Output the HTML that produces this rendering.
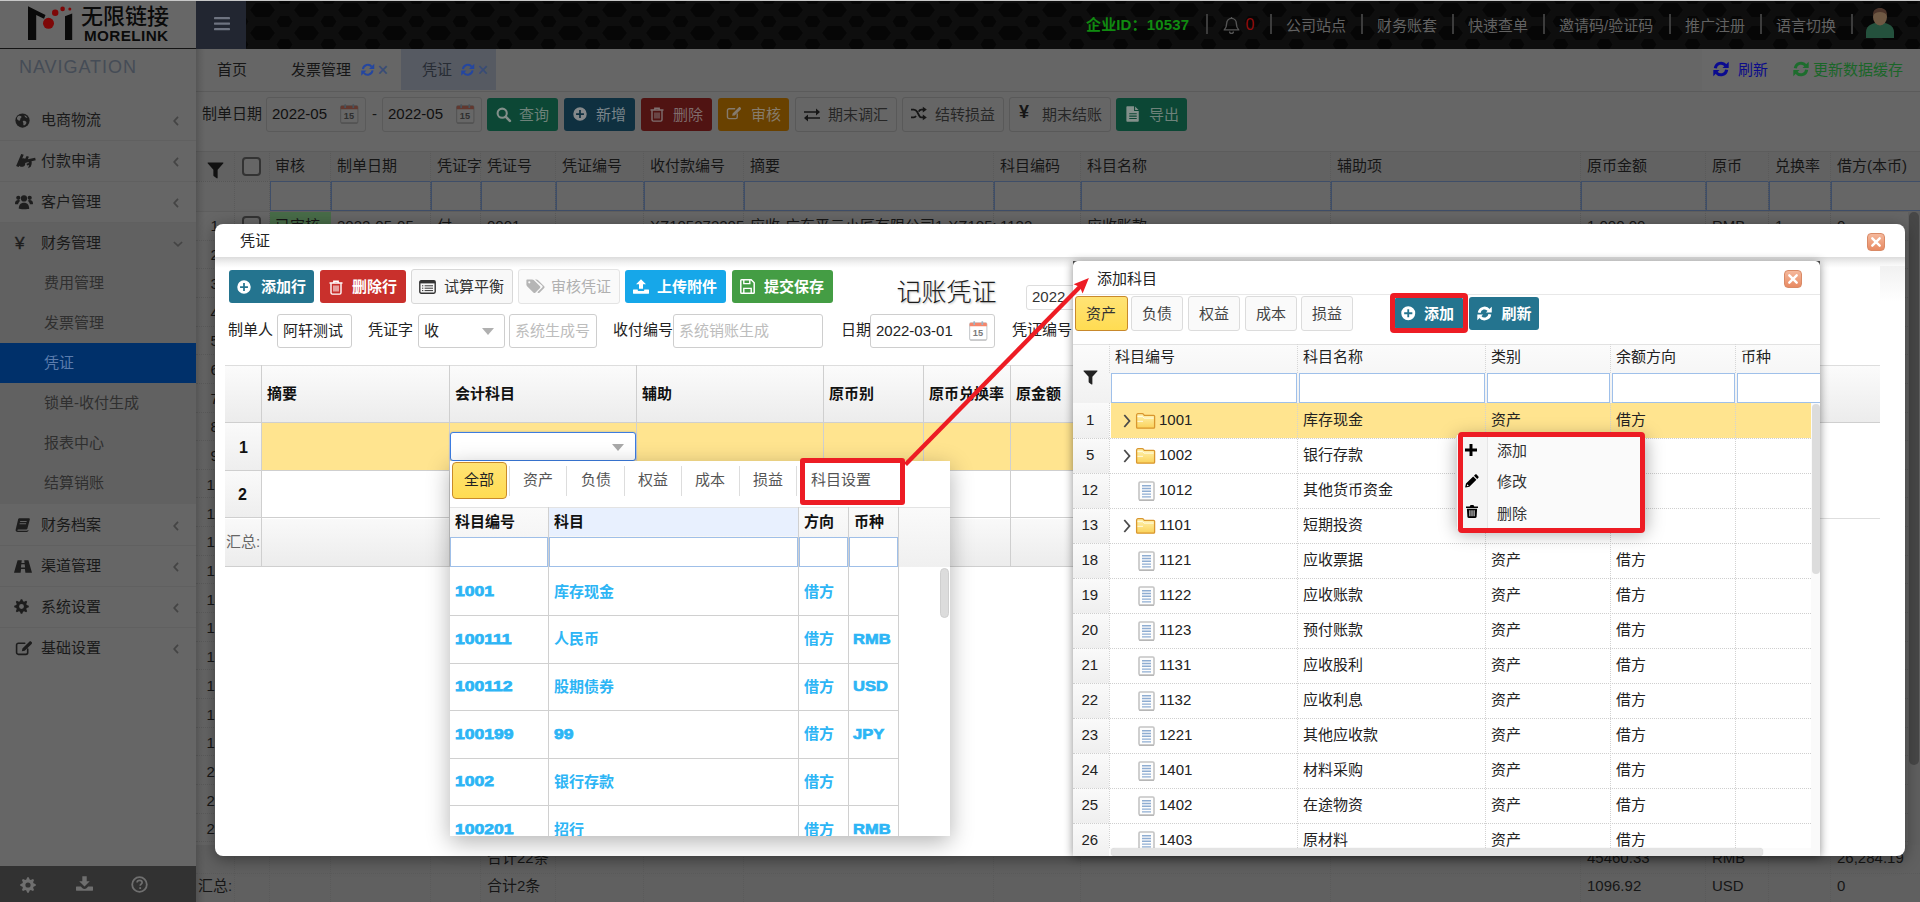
<!DOCTYPE html>
<html lang="zh-CN"><head><meta charset="utf-8"><title>凭证</title><style>
html,body{margin:0;padding:0}
body{width:1920px;height:902px;overflow:hidden;position:relative;background:#666666;
font-family:"Liberation Sans","Noto Sans CJK SC",sans-serif;font-size:15px;color:#222}
div{box-sizing:border-box}
</style></head><body>
<div id="page" style="position:absolute;left:0;top:0;width:1920px;height:902px;overflow:hidden;background:#666666">
<div style="position:absolute;left:0;top:0;width:1920px;height:1px;background:#c8c8c8"></div>
<div style="position:absolute;left:0px;top:1px;width:196px;height:901px;box-sizing:border-box;background:#666666;"></div><div style="position:absolute;left:0px;top:1px;width:196px;height:47px;box-sizing:border-box;background:#676767;"></div><div style="position:absolute;left:0px;top:48px;width:196px;height:1px;box-sizing:border-box;background:#141414;"></div><svg style="position:absolute;left:26px;top:5px" width="48" height="37" viewBox="0 0 48 37"><path d="M2 1.200 L19.500 10 L18 13.800 L10.200 10 L10.200 35 L2 35z" fill="#0a0a0a"/><path d="M39 11.300 L46.200 8.500 L46.200 35 L39 35z" fill="#0a0a0a"/><circle cx="22.500" cy="18.300" r="5.500" fill="#7e0808"/><circle cx="29.200" cy="7.800" r="3.200" fill="#7e0808"/><circle cx="36.600" cy="3.900" r="2.300" fill="#7e0808"/><circle cx="43.800" cy="3.900" r="1.500" fill="#7e0808"/></svg><div style="position:absolute;left:81px;top:4.5px;height:24px;line-height:24px;font-size:22px;color:#0a0a0a;font-weight:500;white-space:nowrap;letter-spacing:0px;">无限链接</div><div style="position:absolute;left:83.5px;top:27.5px;height:16px;line-height:16px;font-size:14px;color:#0a0a0a;font-weight:bold;white-space:nowrap;letter-spacing:0.35px;transform:scaleX(1.09);transform-origin:0 50%;">MORELINK</div><div style="position:absolute;left:19px;top:55.0px;height:24px;line-height:24px;font-size:18px;color:#454c56;font-weight:normal;white-space:nowrap;letter-spacing:0.95px;">NAVIGATION</div><div style="position:absolute;left:0px;top:222px;width:196px;height:282px;box-sizing:border-box;background:#616161;"></div><div style="position:absolute;left:41px;top:108.5px;height:21px;line-height:21px;font-size:15px;color:#1a1a1a;font-weight:normal;white-space:nowrap;">电商物流</div><svg style="position:absolute;left:15px;top:113px;overflow:visible" width="15" height="15" viewBox="0 0 16 16" ><circle cx="8" cy="8" r="7.6" fill="#1d1d1d"/><path d="M3.2 3.4c1.4-.9 2.9-.6 3.6.2.6.8-.4 1.500-1 2.300-.5.7.2 1.500-.6 2.100-.9.5-2.200-.3-2.900-1.300-.5-1.100-.1-2.500.9-3.300z" fill="#666666"/><path d="M8.6 8.600c1-.5 2.600-.2 3.300.7.6.9.1 2.200-.7 3-.7.8-1.700 1.300-2.200.5-.4-.7.2-1.500-.2-2.300-.3-.7-1-1.400-.2-1.900z" fill="#666666"/><path d="M10.200 2.300c1.300.4 2.500 1.400 3.100 2.700-.7.3-1.500.2-2-.4-.5-.6-1.300-1.300-1.100-2.300z" fill="#666666"/></svg><svg style="position:absolute;left:173px;top:115.5px;overflow:visible" width="6" height="10" viewBox="0 0 6 10" ><path d="M5 .9 1.200 5 5 9.100" fill="none" stroke="#444" stroke-width="1.700"/></svg><div style="position:absolute;left:41px;top:149.5px;height:21px;line-height:21px;font-size:15px;color:#1a1a1a;font-weight:normal;white-space:nowrap;">付款申请</div><svg style="position:absolute;left:14.5px;top:152.5px;overflow:visible" width="21.5" height="16" viewBox="0 0 19 14" ><path d="M1 11.500 5.500.8l2.200.6-1.300 3.400c.9-.5 2-.4 2.600.3l1.300-2.600 2 .7-1 2.300 6.500-1.300.5 2.200-3.700.9c.5 1.600 0 3.300-.7 4.800l-2.300 1.200.9-2.700-1.800.4-.6-1.600 2.100-.6-.2-1-3 .9c.3 1.300-.2 2.600-1.500 3.200-1.400.6-2.800.2-3.500-.800l-.9 1.300z" fill="#1d1d1d"/></svg><svg style="position:absolute;left:173px;top:156.5px;overflow:visible" width="6" height="10" viewBox="0 0 6 10" ><path d="M5 .9 1.200 5 5 9.100" fill="none" stroke="#444" stroke-width="1.700"/></svg><div style="position:absolute;left:41px;top:190.5px;height:21px;line-height:21px;font-size:15px;color:#1a1a1a;font-weight:normal;white-space:nowrap;">客户管理</div><svg style="position:absolute;left:14.5px;top:194px;overflow:visible" width="18" height="15.5" viewBox="0 0 18 15" ><circle cx="9" cy="4.2" r="3.100" fill="#1d1d1d"/><path d="M3.800 14.500c0-4 2-6 5.200-6s5.200 2 5.200 6c0 .6-10.400.6-10.400 0z" fill="#1d1d1d"/><circle cx="3.300" cy="3.600" r="2.100" fill="#1d1d1d"/><path d="M0 9.500c0-2.600 1.200-3.800 3.300-3.800.8 0 1.500.3 2 .7-1.300 1-2 2.200-2.200 3.600-1.600 0-3.100.2-3.100-.5z" fill="#1d1d1d"/><circle cx="14.700" cy="3.600" r="2.100" fill="#1d1d1d"/><path d="M18 9.500c0-2.600-1.200-3.800-3.300-3.800-.8 0-1.500.3-2 .7 1.300 1 2 2.200 2.200 3.600 1.600 0 3.100.2 3.100-.5z" fill="#1d1d1d"/></svg><svg style="position:absolute;left:173px;top:197.5px;overflow:visible" width="6" height="10" viewBox="0 0 6 10" ><path d="M5 .9 1.200 5 5 9.100" fill="none" stroke="#444" stroke-width="1.700"/></svg><div style="position:absolute;left:41px;top:231.5px;height:21px;line-height:21px;font-size:15px;color:#1a1a1a;font-weight:normal;white-space:nowrap;">财务管理</div><div style="position:absolute;left:15px;top:232.0px;height:23px;line-height:23px;font-size:17px;color:#1d1d1d;font-weight:normal;white-space:nowrap;-webkit-text-stroke:0.4px #1d1d1d;">¥</div><svg style="position:absolute;left:172.5px;top:241px;overflow:visible" width="10" height="6" viewBox="0 0 10 6" ><path d="M.9 1 5 4.800 9.100 1" fill="none" stroke="#444" stroke-width="1.700"/></svg><div style="position:absolute;left:41px;top:513.5px;height:21px;line-height:21px;font-size:15px;color:#1a1a1a;font-weight:normal;white-space:nowrap;">财务档案</div><svg style="position:absolute;left:15px;top:518px;overflow:visible" width="15" height="14" viewBox="0 0 15 14" ><path d="M4.200.3h9.600c.8 0 1.200.6 1 1.300L12.400 10.500c-.2.700-.9 1.100-1.600 1.100H3.200c-.5 0-.8.3-.8.6 0 .4.300.6.800.6h8.700c.5 0 1-.4 1.100-.8l.5.300c-.2 1-.9 1.600-1.800 1.600H2.800C1.300 13.900.3 12.800.7 11.500L3 2C3.100 1 3.600.3 4.200.3z" fill="#1d1d1d"/><rect x="6" y="3" width="6.500" height="1" fill="#666666" transform="skewX(-14)"/><rect x="6" y="5.200" width="6.500" height="1" fill="#666666" transform="skewX(-14)"/></svg><svg style="position:absolute;left:173px;top:520.5px;overflow:visible" width="6" height="10" viewBox="0 0 6 10" ><path d="M5 .9 1.200 5 5 9.100" fill="none" stroke="#444" stroke-width="1.700"/></svg><div style="position:absolute;left:41px;top:554.5px;height:21px;line-height:21px;font-size:15px;color:#1a1a1a;font-weight:normal;white-space:nowrap;">渠道管理</div><svg style="position:absolute;left:14px;top:560px;overflow:visible" width="18" height="13" viewBox="0 0 18 13" ><path d="M3.600.3h4.200L7.400 3H10.600L10.200.3h4.200L18 12.700h-6.600L10.900 9H7.100l-.5 3.700H0z M7.300 4.200 6.900 7.500h4.200l-.4-3.300z" fill="#1d1d1d" fill-rule="evenodd"/></svg><svg style="position:absolute;left:173px;top:561.5px;overflow:visible" width="6" height="10" viewBox="0 0 6 10" ><path d="M5 .9 1.200 5 5 9.100" fill="none" stroke="#444" stroke-width="1.700"/></svg><div style="position:absolute;left:41px;top:595.5px;height:21px;line-height:21px;font-size:15px;color:#1a1a1a;font-weight:normal;white-space:nowrap;">系统设置</div><svg style="position:absolute;left:14px;top:599px;overflow:visible" width="15" height="15" viewBox="0 0 16 16" ><path d="M15.76 7.24 L15.76 8.76 L13.55 9.68 L13.12 10.73 L14.03 12.95 L12.95 14.03 L10.73 13.12 L9.68 13.55 L8.76 15.76 L7.24 15.76 L6.32 13.55 L5.27 13.12 L3.05 14.03 L1.97 12.95 L2.88 10.73 L2.45 9.68 L0.24 8.76 L0.24 7.24 L2.45 6.32 L2.88 5.27 L1.97 3.05 L3.05 1.97 L5.27 2.88 L6.32 2.45 L7.24 0.24 L8.76 0.24 L9.68 2.45 L10.73 2.88 L12.95 1.97 L14.03 3.05 L13.12 5.27 L13.55 6.32Z M8 5.400a2.600 2.600 0 1 0 0 5.200 2.600 2.600 0 1 0 0-5.200z" fill="#1d1d1d" fill-rule="evenodd"/></svg><svg style="position:absolute;left:173px;top:602.5px;overflow:visible" width="6" height="10" viewBox="0 0 6 10" ><path d="M5 .9 1.200 5 5 9.100" fill="none" stroke="#444" stroke-width="1.700"/></svg><div style="position:absolute;left:41px;top:636.5px;height:21px;line-height:21px;font-size:15px;color:#1a1a1a;font-weight:normal;white-space:nowrap;">基础设置</div><svg style="position:absolute;left:15px;top:640px;overflow:visible" width="18" height="16" viewBox="0 0 17 15" ><path d="M12 8.500v3.300c0 1-.8 1.700-1.700 1.700H3.200c-1 0-1.700-.8-1.700-1.700V4.700c0-1 .8-1.700 1.700-1.700h6" fill="none" stroke="#1d1d1d" stroke-width="1.500" stroke-linecap="round"/><path d="M6.500 10.500 7 8 13.500 1.500c.5-.5 1.300-.5 1.800 0l.4.400c.5.5.5 1.300 0 1.800L9.200 10.200z" fill="#1d1d1d"/></svg><svg style="position:absolute;left:173px;top:643.5px;overflow:visible" width="6" height="10" viewBox="0 0 6 10" ><path d="M5 .9 1.200 5 5 9.100" fill="none" stroke="#444" stroke-width="1.700"/></svg><div style="position:absolute;left:0px;top:140px;width:196px;height:1px;box-sizing:border-box;background:#606060;"></div><div style="position:absolute;left:0px;top:181px;width:196px;height:1px;box-sizing:border-box;background:#606060;"></div><div style="position:absolute;left:0px;top:222px;width:196px;height:1px;box-sizing:border-box;background:#606060;"></div><div style="position:absolute;left:0px;top:545px;width:196px;height:1px;box-sizing:border-box;background:#606060;"></div><div style="position:absolute;left:0px;top:586px;width:196px;height:1px;box-sizing:border-box;background:#606060;"></div><div style="position:absolute;left:0px;top:627px;width:196px;height:1px;box-sizing:border-box;background:#606060;"></div><div style="position:absolute;left:0px;top:343px;width:196px;height:40px;box-sizing:border-box;background:#00306a;"></div><div style="position:absolute;left:44px;top:271.5px;height:21px;line-height:21px;font-size:15px;color:#2f2f2f;font-weight:normal;white-space:nowrap;">费用管理</div><div style="position:absolute;left:44px;top:311.5px;height:21px;line-height:21px;font-size:15px;color:#2f2f2f;font-weight:normal;white-space:nowrap;">发票管理</div><div style="position:absolute;left:44px;top:351.5px;height:21px;line-height:21px;font-size:15px;color:#5b7cad;font-weight:normal;white-space:nowrap;">凭证</div><div style="position:absolute;left:44px;top:391.5px;height:21px;line-height:21px;font-size:15px;color:#2f2f2f;font-weight:normal;white-space:nowrap;">锁单-收付生成</div><div style="position:absolute;left:44px;top:431.5px;height:21px;line-height:21px;font-size:15px;color:#2f2f2f;font-weight:normal;white-space:nowrap;">报表中心</div><div style="position:absolute;left:44px;top:471.5px;height:21px;line-height:21px;font-size:15px;color:#2f2f2f;font-weight:normal;white-space:nowrap;">结算销账</div><div style="position:absolute;left:0px;top:866px;width:196px;height:36px;box-sizing:border-box;background:#323232;"></div><svg style="position:absolute;left:20px;top:877px;overflow:visible" width="16" height="16" viewBox="0 0 16 16" ><path d="M15.76 7.24 L15.76 8.76 L13.55 9.68 L13.12 10.73 L14.03 12.95 L12.95 14.03 L10.73 13.12 L9.68 13.55 L8.76 15.76 L7.24 15.76 L6.32 13.55 L5.27 13.12 L3.05 14.03 L1.97 12.95 L2.88 10.73 L2.45 9.68 L0.24 8.76 L0.24 7.24 L2.45 6.32 L2.88 5.27 L1.97 3.05 L3.05 1.97 L5.27 2.88 L6.32 2.45 L7.24 0.24 L8.76 0.24 L9.68 2.45 L10.73 2.88 L12.95 1.97 L14.03 3.05 L13.12 5.27 L13.55 6.32Z M8 5.400a2.600 2.600 0 1 0 0 5.200 2.600 2.600 0 1 0 0-5.200z" fill="#6f6f6f" fill-rule="evenodd"/></svg><svg style="position:absolute;left:76px;top:876px;overflow:visible" width="17" height="15" viewBox="0 0 17 15" ><path d="M6.300.2h4.400v5h3.100L8.500 10.500 3.200 5.200h3.100z" fill="#6f6f6f"/><path d="M.5 10.500h4.300l1.700 1.700c1.100 1.100 2.900 1.100 4 0l1.700-1.700h4.300c.3 0 .5.200.5.500v3.300c0 .3-.2.500-.5.500H.5c-.3 0-.5-.2-.5-.5V11c0-.3.200-.5.500-.5z" fill="#6f6f6f"/></svg><svg style="position:absolute;left:131px;top:876px;overflow:visible" width="17" height="17" viewBox="0 0 17 17" ><circle cx="8.500" cy="8.500" r="7.300" fill="none" stroke="#6f6f6f" stroke-width="1.800"/><path d="M6.100 6.600c0-1.400 1.100-2.300 2.500-2.300s2.500.9 2.500 2.200c0 1.600-1.900 1.700-1.900 3.300" fill="none" stroke="#6f6f6f" stroke-width="1.700"/><rect x="8.300" y="11.200" width="1.800" height="1.800" fill="#6f6f6f"/></svg>
<svg style="position:absolute;left:196px;top:1px" width="1724" height="48"><defs><pattern id="hx" width="44" height="23" patternUnits="userSpaceOnUse"><path d="M10.0 9L15.5 2L29.5 2L35.0 9L29.5 16L15.5 16z" fill="#060606"/><path d="M-7.5 20.5L-4.0 15.0L5.0 15.0L8.5 20.5L5.0 26.0L-4.0 26.0z" fill="#060606"/><path d="M-7.5 -2.5L-4.0 -8.0L5.0 -8.0L8.5 -2.5L5.0 3.0L-4.0 3.0z" fill="#060606"/><path d="M36.5 20.5L40.0 15.0L49.0 15.0L52.5 20.5L49.0 26.0L40.0 26.0z" fill="#060606"/><path d="M36.5 -2.5L40.0 -8.0L49.0 -8.0L52.5 -2.5L49.0 3.0L40.0 3.0z" fill="#060606"/></pattern></defs><rect width="1724" height="48" fill="#0e0e0e"/><rect width="1724" height="48" fill="url(#hx)"/></svg><div style="position:absolute;left:196px;top:1px;width:50px;height:48px;box-sizing:border-box;background:#222631;"></div><svg style="position:absolute;left:214px;top:17px;overflow:visible" width="16" height="14" viewBox="0 0 16 14" ><rect x="0" y="0" width="16" height="2.2" rx=".4" fill="#6e7380"/><rect x="0" y="5.5" width="16" height="2.2" rx=".4" fill="#6e7380"/><rect x="0" y="11" width="16" height="2.2" rx=".4" fill="#6e7380"/></svg><div style="position:absolute;left:1086px;top:14.0px;height:21px;line-height:21px;font-size:15px;color:#108a10;font-weight:bold;white-space:nowrap;letter-spacing:0.15px;">企业ID：10537</div><div style="position:absolute;left:1206px;top:14px;width:1.5px;height:20px;box-sizing:border-box;background:#3c3c3c;"></div><div style="position:absolute;left:1270px;top:14px;width:1.5px;height:20px;box-sizing:border-box;background:#3c3c3c;"></div><div style="position:absolute;left:1361px;top:14px;width:1.5px;height:20px;box-sizing:border-box;background:#3c3c3c;"></div><div style="position:absolute;left:1452px;top:14px;width:1.5px;height:20px;box-sizing:border-box;background:#3c3c3c;"></div><div style="position:absolute;left:1543px;top:14px;width:1.5px;height:20px;box-sizing:border-box;background:#3c3c3c;"></div><div style="position:absolute;left:1669px;top:14px;width:1.5px;height:20px;box-sizing:border-box;background:#3c3c3c;"></div><div style="position:absolute;left:1760px;top:14px;width:1.5px;height:20px;box-sizing:border-box;background:#3c3c3c;"></div><div style="position:absolute;left:1851px;top:14px;width:1.5px;height:20px;box-sizing:border-box;background:#3c3c3c;"></div><svg style="position:absolute;left:1223px;top:16.5px;overflow:visible" width="17" height="18" viewBox="0 0 15 16" ><path d="M7.500 1.200c2.600 0 4.300 2 4.300 4.600 0 3.400 1 4.600 2.200 5.700H1c1.200-1.100 2.200-2.300 2.200-5.700 0-2.600 1.700-4.600 4.300-4.600z" fill="none" stroke="#555" stroke-width="1.200" stroke-linejoin="round"/><path d="M5.800 12.800c0 1 .7 1.800 1.700 1.800s1.700-.8 1.700-1.800" fill="none" stroke="#555" stroke-width="1.200"/><rect x="6.900" y="0" width="1.200" height="1.500" fill="#555"/></svg><div style="position:absolute;left:1245.5px;top:14.0px;height:22px;line-height:22px;font-size:16px;color:#930c0c;font-weight:normal;white-space:nowrap;">0</div><div style="position:absolute;left:1286px;top:14.5px;height:21px;line-height:21px;font-size:15px;color:#626262;font-weight:normal;white-space:nowrap;">公司站点</div><div style="position:absolute;left:1377px;top:14.5px;height:21px;line-height:21px;font-size:15px;color:#626262;font-weight:normal;white-space:nowrap;">财务账套</div><div style="position:absolute;left:1468px;top:14.5px;height:21px;line-height:21px;font-size:15px;color:#626262;font-weight:normal;white-space:nowrap;">快速查单</div><div style="position:absolute;left:1559px;top:14.5px;height:21px;line-height:21px;font-size:15px;color:#626262;font-weight:normal;white-space:nowrap;">邀请码/验证码</div><div style="position:absolute;left:1685px;top:14.5px;height:21px;line-height:21px;font-size:15px;color:#626262;font-weight:normal;white-space:nowrap;">推广注册</div><div style="position:absolute;left:1776px;top:14.5px;height:21px;line-height:21px;font-size:15px;color:#626262;font-weight:normal;white-space:nowrap;">语言切换</div><svg style="position:absolute;left:1866px;top:8px" width="28" height="30" viewBox="0 0 28 30"><path d="M0 30v-6c0-5 4-8 9-9h10c5 1 9 4 9 9v6z" fill="#24513d"/><ellipse cx="14" cy="9" rx="7" ry="8.500" fill="#6e5843"/><path d="M7 7c0-5 3-7 7-7s7 2 7 7c-2-2-4-3-7-3s-5 1-7 3z" fill="#4b342a"/></svg>
<div style="position:absolute;left:196px;top:49px;width:1724px;height:42px;box-sizing:border-box;background:#666666;"></div><div style="position:absolute;left:196px;top:91px;width:1724px;height:1px;box-sizing:border-box;background:#5b5b5b;"></div><div style="position:absolute;left:401px;top:49px;width:95px;height:41px;box-sizing:border-box;background:#565a62;"></div><div style="position:absolute;left:217px;top:58.5px;height:21px;line-height:21px;font-size:15px;color:#161616;font-weight:normal;white-space:nowrap;">首页</div><div style="position:absolute;left:291px;top:58.5px;height:21px;line-height:21px;font-size:15px;color:#161616;font-weight:normal;white-space:nowrap;">发票管理</div><svg style="position:absolute;left:361px;top:63px;overflow:visible" width="13.5" height="13.5" viewBox="0 0 16 16" ><path d="M2.300 7.200A5.800 5.800 0 0 1 12.600 4.400" fill="none" stroke="#2446a0" stroke-width="2.3"/><path d="M15.700.800V7H9.500z" fill="#2446a0"/><path d="M13.700 8.800A5.800 5.800 0 0 1 3.400 11.600" fill="none" stroke="#2446a0" stroke-width="2.3"/><path d="M.300 15.200V9H6.500z" fill="#2446a0"/></svg><div style="position:absolute;left:377.5px;top:58.0px;height:24px;line-height:24px;font-size:18px;color:#384c78;font-weight:normal;white-space:nowrap;font-family:Liberation Sans,sans-serif;-webkit-text-stroke:0.35px #384c78;">×</div><div style="position:absolute;left:422px;top:58.5px;height:21px;line-height:21px;font-size:15px;color:#272c34;font-weight:normal;white-space:nowrap;">凭证</div><svg style="position:absolute;left:461px;top:63px;overflow:visible" width="13.5" height="13.5" viewBox="0 0 16 16" ><path d="M2.300 7.200A5.800 5.800 0 0 1 12.600 4.400" fill="none" stroke="#2446a0" stroke-width="2.3"/><path d="M15.700.800V7H9.500z" fill="#2446a0"/><path d="M13.700 8.800A5.800 5.800 0 0 1 3.400 11.600" fill="none" stroke="#2446a0" stroke-width="2.3"/><path d="M.300 15.200V9H6.500z" fill="#2446a0"/></svg><div style="position:absolute;left:477.5px;top:58.0px;height:24px;line-height:24px;font-size:18px;color:#384c78;font-weight:normal;white-space:nowrap;font-family:Liberation Sans,sans-serif;-webkit-text-stroke:0.35px #384c78;">×</div><div style="position:absolute;left:1702px;top:49px;width:218px;height:42px;box-sizing:border-box;background:#686868;"></div><svg style="position:absolute;left:1713px;top:60.5px;overflow:visible" width="16" height="16" viewBox="0 0 16 16" ><path d="M2.300 7.200A5.800 5.800 0 0 1 12.600 4.400" fill="none" stroke="#0a0a90" stroke-width="3"/><path d="M15.700.800V7H9.500z" fill="#0a0a90"/><path d="M13.700 8.800A5.800 5.800 0 0 1 3.400 11.600" fill="none" stroke="#0a0a90" stroke-width="3"/><path d="M.300 15.200V9H6.500z" fill="#0a0a90"/></svg><div style="position:absolute;left:1738px;top:58.5px;height:21px;line-height:21px;font-size:15px;color:#0c0c8a;font-weight:normal;white-space:nowrap;">刷新</div><svg style="position:absolute;left:1793px;top:60.5px;overflow:visible" width="16" height="16" viewBox="0 0 16 16" ><path d="M2.300 7.200A5.800 5.800 0 0 1 12.600 4.400" fill="none" stroke="#1d6d2d" stroke-width="3"/><path d="M15.700.800V7H9.500z" fill="#1d6d2d"/><path d="M13.700 8.800A5.800 5.800 0 0 1 3.400 11.600" fill="none" stroke="#1d6d2d" stroke-width="3"/><path d="M.300 15.200V9H6.500z" fill="#1d6d2d"/></svg><div style="position:absolute;left:1813px;top:58.5px;height:21px;line-height:21px;font-size:15px;color:#1a6628;font-weight:normal;white-space:nowrap;">更新数据缓存</div>
<div style="position:absolute;left:202px;top:103.0px;height:21px;line-height:21px;font-size:15px;color:#161616;font-weight:normal;white-space:nowrap;">制单日期</div><div style="position:absolute;left:266px;top:97px;width:100px;height:35px;box-sizing:border-box;border:1px solid #5a5a5a;border-radius:3px;background:#666666;"></div><div style="position:absolute;left:272px;top:103.0px;height:21px;line-height:21px;font-size:15px;color:#101010;font-weight:normal;white-space:nowrap;">2022-05</div><svg style="position:absolute;left:340px;top:104px;overflow:visible" width="18.5" height="20.041666666666668" viewBox="0 0 18 19.500" ><rect x=".6" y="1.800" width="16.800" height="16.600" rx="1.300" fill="#676767" stroke="#555555" stroke-width="1.100"/><path d="M1.200 18.700h15.600" stroke="#525252" stroke-width="1.100"/><path d="M.6 5.200V3.100c0-.700.600-1.300 1.300-1.300h14.200c.700 0 1.300.600 1.300 1.300v2.100z" fill="#62382f"/><rect x="4.200" y=".2" width="1.700" height="3.600" rx=".5" fill="#49525a"/><rect x="12.100" y=".2" width="1.700" height="3.600" rx=".5" fill="#49525a"/><text x="8.700" y="14.300" font-family="Liberation Sans, sans-serif" font-size="9" font-weight="bold" text-anchor="middle" fill="#2f2f2f">15</text></svg><div style="position:absolute;left:382px;top:97px;width:100px;height:35px;box-sizing:border-box;border:1px solid #5a5a5a;border-radius:3px;background:#666666;"></div><div style="position:absolute;left:388px;top:103.0px;height:21px;line-height:21px;font-size:15px;color:#101010;font-weight:normal;white-space:nowrap;">2022-05</div><svg style="position:absolute;left:456px;top:104px;overflow:visible" width="18.5" height="20.041666666666668" viewBox="0 0 18 19.500" ><rect x=".6" y="1.800" width="16.800" height="16.600" rx="1.300" fill="#676767" stroke="#555555" stroke-width="1.100"/><path d="M1.200 18.700h15.600" stroke="#525252" stroke-width="1.100"/><path d="M.6 5.200V3.100c0-.700.600-1.300 1.300-1.300h14.200c.700 0 1.300.600 1.300 1.300v2.100z" fill="#62382f"/><rect x="4.200" y=".2" width="1.700" height="3.600" rx=".5" fill="#49525a"/><rect x="12.100" y=".2" width="1.700" height="3.600" rx=".5" fill="#49525a"/><text x="8.700" y="14.300" font-family="Liberation Sans, sans-serif" font-size="9" font-weight="bold" text-anchor="middle" fill="#2f2f2f">15</text></svg><div style="position:absolute;left:372px;top:102.5px;height:21px;line-height:21px;font-size:15px;color:#161616;font-weight:normal;white-space:nowrap;">-</div><div style="position:absolute;left:487px;top:98px;width:71px;height:33px;box-sizing:border-box;background:#0c4735;border-radius:3px;"></div><svg style="position:absolute;left:496px;top:107px;overflow:visible" width="15" height="15" viewBox="0 0 16 16" ><circle cx="6.600" cy="6.600" r="4.900" fill="none" stroke="#83908b" stroke-width="2.200"/><path d="M10.300 10.300 14.800 14.800" stroke="#83908b" stroke-width="2.800" stroke-linecap="round"/></svg><div style="position:absolute;left:519px;top:103.5px;height:21px;line-height:21px;font-size:15px;color:#6e827a;font-weight:normal;white-space:nowrap;">查询</div><div style="position:absolute;left:564px;top:98px;width:71px;height:33px;box-sizing:border-box;background:#0f3040;border-radius:3px;"></div><svg style="position:absolute;left:573px;top:107px;overflow:visible" width="14" height="14" viewBox="0 0 16 16" ><path d="M8 .3a7.700 7.700 0 1 0 0 15.400A7.700 7.700 0 1 0 8 .3z M7 3.500h2v3.500h3.500v2H9v3.500H7V9H3.500V7H7z" fill="#85898b" fill-rule="evenodd"/></svg><div style="position:absolute;left:596px;top:103.5px;height:21px;line-height:21px;font-size:15px;color:#7a858b;font-weight:normal;white-space:nowrap;">新增</div><div style="position:absolute;left:641px;top:98px;width:71px;height:33px;box-sizing:border-box;background:#501312;border-radius:3px;"></div><svg style="position:absolute;left:650px;top:106.5px;overflow:visible" width="14" height="15" viewBox="0 0 14 15" ><path d="M.5 3h13M4.800 3V1.300h4.400V3" fill="none" stroke="#7f7070" stroke-width="1.400"/><path d="M2 3.200v9.500c0 .8.600 1.400 1.400 1.400h7.200c.8 0 1.400-.6 1.400-1.400V3.200" fill="none" stroke="#7f7070" stroke-width="1.400"/><path d="M5 5.500v6M7 5.500v6M9 5.500v6" stroke="#7f7070" stroke-width="1.100"/></svg><div style="position:absolute;left:673px;top:103.5px;height:21px;line-height:21px;font-size:15px;color:#7f6c6c;font-weight:normal;white-space:nowrap;">删除</div><div style="position:absolute;left:718px;top:98px;width:71px;height:33px;box-sizing:border-box;background:#694100;border-radius:3px;"></div><svg style="position:absolute;left:726px;top:106px;overflow:visible" width="16" height="14" viewBox="0 0 17 15" ><path d="M12 8.500v3.300c0 1-.8 1.700-1.700 1.700H3.200c-1 0-1.700-.8-1.700-1.700V4.700c0-1 .8-1.700 1.700-1.700h6" fill="none" stroke="#857b6e" stroke-width="1.500" stroke-linecap="round"/><path d="M6.500 10.500 7 8 13.500 1.500c.5-.5 1.300-.5 1.800 0l.4.400c.5.5.5 1.300 0 1.800L9.200 10.200z" fill="#857b6e"/></svg><div style="position:absolute;left:751px;top:103.5px;height:21px;line-height:21px;font-size:15px;color:#877c6c;font-weight:normal;white-space:nowrap;">审核</div><div style="position:absolute;left:795px;top:97px;width:102px;height:35px;box-sizing:border-box;background:#666666;border-radius:3px;border:1px solid #595959;"></div><svg style="position:absolute;left:804px;top:108px;overflow:visible" width="16" height="14" viewBox="0 0 16 14" ><path d="M0 3.200h12V.6L16 4l-4 3.400V4.800H0z" fill="#161616"/><path d="M16 9.200H4V6.600L0 10l4 3.400v-2.600h12z" fill="#161616"/></svg><div style="position:absolute;left:828px;top:103.5px;height:21px;line-height:21px;font-size:15px;color:#262626;font-weight:normal;white-space:nowrap;">期末调汇</div><div style="position:absolute;left:902px;top:97px;width:102px;height:35px;box-sizing:border-box;background:#666666;border-radius:3px;border:1px solid #595959;"></div><svg style="position:absolute;left:911px;top:107px;overflow:visible" width="16" height="14" viewBox="0 0 16 14" ><path d="M0 2.600h2.800c1.600 0 2.500.8 3.300 2.200L8.400 9c.5.900 1 1.400 2 1.400H12" fill="none" stroke="#161616" stroke-width="1.800"/><path d="M0 10.400h2.800c1.100 0 1.700-.5 2.200-1.300M7.700 4.600C8.300 3.400 9 2.600 10.400 2.600H12" fill="none" stroke="#161616" stroke-width="1.800"/><path d="M11.800-.2 15.800 2.600 11.800 5.400zM11.800 7.600 15.800 10.400 11.800 13.200z" fill="#161616"/></svg><div style="position:absolute;left:935px;top:103.5px;height:21px;line-height:21px;font-size:15px;color:#262626;font-weight:normal;white-space:nowrap;">结转损益</div><div style="position:absolute;left:1009px;top:97px;width:102px;height:35px;box-sizing:border-box;background:#666666;border-radius:3px;border:1px solid #595959;"></div><div style="position:absolute;left:1019px;top:100.0px;height:24px;line-height:24px;font-size:18px;color:#161616;font-weight:bold;white-space:nowrap;">¥</div><div style="position:absolute;left:1042px;top:103.5px;height:21px;line-height:21px;font-size:15px;color:#262626;font-weight:normal;white-space:nowrap;">期末结账</div><div style="position:absolute;left:1116px;top:98px;width:71px;height:33px;box-sizing:border-box;background:#0c4735;border-radius:3px;"></div><svg style="position:absolute;left:1126px;top:106px;overflow:visible" width="14" height="16" viewBox="0 0 13 15" ><path d="M1.200.3h6.300v4.400h4.400v9.100c0 .5-.4.900-.9.900H1.200c-.5 0-.9-.4-.9-.9V1.200c0-.5.400-.9.900-.9z" fill="#83908b"/><path d="M8.500.5 11.700 3.700H8.500z" fill="#83908b"/><path d="M3 7.300h7M3 9.500h7M3 11.700h7" stroke="#0c4735" stroke-width="1"/></svg><div style="position:absolute;left:1149px;top:103.5px;height:21px;line-height:21px;font-size:15px;color:#6e827a;font-weight:normal;white-space:nowrap;">导出</div>
<div style="position:absolute;left:196px;top:151px;width:1724px;height:30px;box-sizing:border-box;background:#626262;border-top:1px solid #5c5c5c;"></div><div style="position:absolute;left:196px;top:181px;width:1724px;height:30px;box-sizing:border-box;background:#646464;"></div><div style="position:absolute;left:196px;top:181px;width:1724px;height:1px;box-sizing:border-box;border-top:1px dotted #575757;"></div><div style="position:absolute;left:196px;top:211px;width:1724px;height:1px;box-sizing:border-box;background:#5e5e5e;"></div><svg style="position:absolute;left:207px;top:162px;overflow:visible" width="17" height="17" viewBox="0 0 16 16" ><path d="M.6 1.200C.4.800.7.400 1.100.400h13.800c.4 0 .7.400.5.800L10 7.300v7.600c0 .500-.5.800-.900.500L6.500 13.500c-.300-.2-.500-.5-.500-.9V7.300z" fill="#111"/></svg><div style="position:absolute;left:242px;top:157px;width:19px;height:19px;box-sizing:border-box;border:2px solid #333;border-radius:4px;background:#666666;"></div><div style="position:absolute;left:234px;top:151px;width:1px;height:751px;box-sizing:border-box;border-left:1px dotted #5a5a5a;"></div><div style="position:absolute;left:269px;top:151px;width:1px;height:751px;box-sizing:border-box;border-left:1px dotted #5a5a5a;"></div><div style="position:absolute;left:275px;top:154.5px;height:21px;line-height:21px;font-size:15px;color:#161616;font-weight:normal;white-space:nowrap;">审核</div><div style="position:absolute;left:270px;top:181px;width:61px;height:30px;box-sizing:border-box;border:1px solid #3f4e68;background:#666666;"></div><div style="position:absolute;left:330px;top:151px;width:1px;height:751px;box-sizing:border-box;border-left:1px dotted #5a5a5a;"></div><div style="position:absolute;left:337px;top:154.5px;height:21px;line-height:21px;font-size:15px;color:#161616;font-weight:normal;white-space:nowrap;">制单日期</div><div style="position:absolute;left:331px;top:181px;width:100px;height:30px;box-sizing:border-box;border:1px solid #3f4e68;background:#666666;"></div><div style="position:absolute;left:430px;top:151px;width:1px;height:751px;box-sizing:border-box;border-left:1px dotted #5a5a5a;"></div><div style="position:absolute;left:437px;top:154.5px;height:21px;line-height:21px;font-size:15px;color:#161616;font-weight:normal;white-space:nowrap;">凭证字</div><div style="position:absolute;left:431px;top:181px;width:50px;height:30px;box-sizing:border-box;border:1px solid #3f4e68;background:#666666;"></div><div style="position:absolute;left:480px;top:151px;width:1px;height:751px;box-sizing:border-box;border-left:1px dotted #5a5a5a;"></div><div style="position:absolute;left:487px;top:154.5px;height:21px;line-height:21px;font-size:15px;color:#161616;font-weight:normal;white-space:nowrap;">凭证号</div><div style="position:absolute;left:481px;top:181px;width:75px;height:30px;box-sizing:border-box;border:1px solid #3f4e68;background:#666666;"></div><div style="position:absolute;left:555px;top:151px;width:1px;height:751px;box-sizing:border-box;border-left:1px dotted #5a5a5a;"></div><div style="position:absolute;left:562px;top:154.5px;height:21px;line-height:21px;font-size:15px;color:#161616;font-weight:normal;white-space:nowrap;">凭证编号</div><div style="position:absolute;left:556px;top:181px;width:88px;height:30px;box-sizing:border-box;border:1px solid #3f4e68;background:#666666;"></div><div style="position:absolute;left:643px;top:151px;width:1px;height:751px;box-sizing:border-box;border-left:1px dotted #5a5a5a;"></div><div style="position:absolute;left:650px;top:154.5px;height:21px;line-height:21px;font-size:15px;color:#161616;font-weight:normal;white-space:nowrap;">收付款编号</div><div style="position:absolute;left:644px;top:181px;width:100px;height:30px;box-sizing:border-box;border:1px solid #3f4e68;background:#666666;"></div><div style="position:absolute;left:743px;top:151px;width:1px;height:751px;box-sizing:border-box;border-left:1px dotted #5a5a5a;"></div><div style="position:absolute;left:750px;top:154.5px;height:21px;line-height:21px;font-size:15px;color:#161616;font-weight:normal;white-space:nowrap;">摘要</div><div style="position:absolute;left:744px;top:181px;width:250px;height:30px;box-sizing:border-box;border:1px solid #3f4e68;background:#666666;"></div><div style="position:absolute;left:993px;top:151px;width:1px;height:751px;box-sizing:border-box;border-left:1px dotted #5a5a5a;"></div><div style="position:absolute;left:1000px;top:154.5px;height:21px;line-height:21px;font-size:15px;color:#161616;font-weight:normal;white-space:nowrap;">科目编码</div><div style="position:absolute;left:994px;top:181px;width:87px;height:30px;box-sizing:border-box;border:1px solid #3f4e68;background:#666666;"></div><div style="position:absolute;left:1080px;top:151px;width:1px;height:751px;box-sizing:border-box;border-left:1px dotted #5a5a5a;"></div><div style="position:absolute;left:1087px;top:154.5px;height:21px;line-height:21px;font-size:15px;color:#161616;font-weight:normal;white-space:nowrap;">科目名称</div><div style="position:absolute;left:1081px;top:181px;width:250px;height:30px;box-sizing:border-box;border:1px solid #3f4e68;background:#666666;"></div><div style="position:absolute;left:1330px;top:151px;width:1px;height:751px;box-sizing:border-box;border-left:1px dotted #5a5a5a;"></div><div style="position:absolute;left:1337px;top:154.5px;height:21px;line-height:21px;font-size:15px;color:#161616;font-weight:normal;white-space:nowrap;">辅助项</div><div style="position:absolute;left:1331px;top:181px;width:250px;height:30px;box-sizing:border-box;border:1px solid #3f4e68;background:#666666;"></div><div style="position:absolute;left:1580px;top:151px;width:1px;height:751px;box-sizing:border-box;border-left:1px dotted #5a5a5a;"></div><div style="position:absolute;left:1587px;top:154.5px;height:21px;line-height:21px;font-size:15px;color:#161616;font-weight:normal;white-space:nowrap;">原币金额</div><div style="position:absolute;left:1581px;top:181px;width:125px;height:30px;box-sizing:border-box;border:1px solid #3f4e68;background:#666666;"></div><div style="position:absolute;left:1705px;top:151px;width:1px;height:751px;box-sizing:border-box;border-left:1px dotted #5a5a5a;"></div><div style="position:absolute;left:1712px;top:154.5px;height:21px;line-height:21px;font-size:15px;color:#161616;font-weight:normal;white-space:nowrap;">原币</div><div style="position:absolute;left:1706px;top:181px;width:63px;height:30px;box-sizing:border-box;border:1px solid #3f4e68;background:#666666;"></div><div style="position:absolute;left:1768px;top:151px;width:1px;height:751px;box-sizing:border-box;border-left:1px dotted #5a5a5a;"></div><div style="position:absolute;left:1775px;top:154.5px;height:21px;line-height:21px;font-size:15px;color:#161616;font-weight:normal;white-space:nowrap;">兑换率</div><div style="position:absolute;left:1769px;top:181px;width:62px;height:30px;box-sizing:border-box;border:1px solid #3f4e68;background:#666666;"></div><div style="position:absolute;left:1830px;top:151px;width:1px;height:751px;box-sizing:border-box;border-left:1px dotted #5a5a5a;"></div><div style="position:absolute;left:1837px;top:154.5px;height:21px;line-height:21px;font-size:15px;color:#161616;font-weight:normal;white-space:nowrap;">借方(本币)</div><div style="position:absolute;left:1831px;top:181px;width:94px;height:30px;box-sizing:border-box;border:1px solid #3f4e68;background:#666666;"></div><div style="position:absolute;left:196px;top:240px;width:1712px;height:1px;box-sizing:border-box;border-top:1px dotted #5c5c5c;"></div><div style="position:absolute;left:196px;top:268px;width:1712px;height:1px;box-sizing:border-box;border-top:1px dotted #5c5c5c;"></div><div style="position:absolute;left:196px;top:297px;width:1712px;height:1px;box-sizing:border-box;border-top:1px dotted #5c5c5c;"></div><div style="position:absolute;left:196px;top:326px;width:1712px;height:1px;box-sizing:border-box;border-top:1px dotted #5c5c5c;"></div><div style="position:absolute;left:196px;top:354px;width:1712px;height:1px;box-sizing:border-box;border-top:1px dotted #5c5c5c;"></div><div style="position:absolute;left:196px;top:383px;width:1712px;height:1px;box-sizing:border-box;border-top:1px dotted #5c5c5c;"></div><div style="position:absolute;left:196px;top:412px;width:1712px;height:1px;box-sizing:border-box;border-top:1px dotted #5c5c5c;"></div><div style="position:absolute;left:196px;top:440px;width:1712px;height:1px;box-sizing:border-box;border-top:1px dotted #5c5c5c;"></div><div style="position:absolute;left:196px;top:469px;width:1712px;height:1px;box-sizing:border-box;border-top:1px dotted #5c5c5c;"></div><div style="position:absolute;left:196px;top:497px;width:1712px;height:1px;box-sizing:border-box;border-top:1px dotted #5c5c5c;"></div><div style="position:absolute;left:196px;top:526px;width:1712px;height:1px;box-sizing:border-box;border-top:1px dotted #5c5c5c;"></div><div style="position:absolute;left:196px;top:555px;width:1712px;height:1px;box-sizing:border-box;border-top:1px dotted #5c5c5c;"></div><div style="position:absolute;left:196px;top:583px;width:1712px;height:1px;box-sizing:border-box;border-top:1px dotted #5c5c5c;"></div><div style="position:absolute;left:196px;top:612px;width:1712px;height:1px;box-sizing:border-box;border-top:1px dotted #5c5c5c;"></div><div style="position:absolute;left:196px;top:641px;width:1712px;height:1px;box-sizing:border-box;border-top:1px dotted #5c5c5c;"></div><div style="position:absolute;left:196px;top:669px;width:1712px;height:1px;box-sizing:border-box;border-top:1px dotted #5c5c5c;"></div><div style="position:absolute;left:196px;top:698px;width:1712px;height:1px;box-sizing:border-box;border-top:1px dotted #5c5c5c;"></div><div style="position:absolute;left:196px;top:727px;width:1712px;height:1px;box-sizing:border-box;border-top:1px dotted #5c5c5c;"></div><div style="position:absolute;left:196px;top:755px;width:1712px;height:1px;box-sizing:border-box;border-top:1px dotted #5c5c5c;"></div><div style="position:absolute;left:196px;top:784px;width:1712px;height:1px;box-sizing:border-box;border-top:1px dotted #5c5c5c;"></div><div style="position:absolute;left:196px;top:813px;width:1712px;height:1px;box-sizing:border-box;border-top:1px dotted #5c5c5c;"></div><div style="position:absolute;left:196px;top:841px;width:1712px;height:1px;box-sizing:border-box;border-top:1px dotted #5c5c5c;"></div><div style="position:absolute;left:196px;top:870px;width:1712px;height:1px;box-sizing:border-box;border-top:1px dotted #5c5c5c;"></div><div style="position:absolute;left:196px;top:899px;width:1712px;height:1px;box-sizing:border-box;border-top:1px dotted #5c5c5c;"></div><div style="position:absolute;left:270px;top:212px;width:61px;height:28px;box-sizing:border-box;background:#486c48;"></div><div style="position:absolute;left:210.5px;top:214.5px;height:21px;line-height:21px;font-size:15px;color:#161616;font-weight:normal;white-space:nowrap;">1</div><div style="position:absolute;left:275px;top:214.5px;height:21px;line-height:21px;font-size:15px;color:#161616;font-weight:normal;white-space:nowrap;">已审核</div><div style="position:absolute;left:337px;top:214.5px;height:21px;line-height:21px;font-size:15px;color:#161616;font-weight:normal;white-space:nowrap;">2022-05-05</div><div style="position:absolute;left:437px;top:214.5px;height:21px;line-height:21px;font-size:15px;color:#161616;font-weight:normal;white-space:nowrap;">付</div><div style="position:absolute;left:487px;top:214.5px;height:21px;line-height:21px;font-size:15px;color:#161616;font-weight:normal;white-space:nowrap;">0001</div><div style="position:absolute;left:650px;top:214.5px;height:21px;line-height:21px;font-size:15px;color:#161616;font-weight:normal;white-space:nowrap;">XZ105272205</div><div style="position:absolute;left:750px;top:214.5px;height:21px;line-height:21px;font-size:15px;color:#161616;font-weight:normal;white-space:nowrap;">应收-广东平云小匠有限公司1-XZ105:</div><div style="position:absolute;left:1000px;top:214.5px;height:21px;line-height:21px;font-size:15px;color:#161616;font-weight:normal;white-space:nowrap;">1122</div><div style="position:absolute;left:1087px;top:214.5px;height:21px;line-height:21px;font-size:15px;color:#161616;font-weight:normal;white-space:nowrap;">应收账款</div><div style="position:absolute;left:1587px;top:214.5px;height:21px;line-height:21px;font-size:15px;color:#161616;font-weight:normal;white-space:nowrap;">1,000.00</div><div style="position:absolute;left:1712px;top:214.5px;height:21px;line-height:21px;font-size:15px;color:#161616;font-weight:normal;white-space:nowrap;">RMB</div><div style="position:absolute;left:1775px;top:214.5px;height:21px;line-height:21px;font-size:15px;color:#161616;font-weight:normal;white-space:nowrap;">1</div><div style="position:absolute;left:1837px;top:214.5px;height:21px;line-height:21px;font-size:15px;color:#161616;font-weight:normal;white-space:nowrap;">0</div><div style="position:absolute;left:242px;top:216px;width:19px;height:19px;box-sizing:border-box;border:2px solid #333;border-radius:4px;background:#666666;"></div><div style="position:absolute;left:210.5px;top:244.21px;height:21px;line-height:21px;font-size:15px;color:#161616;font-weight:normal;white-space:nowrap;">2</div><div style="position:absolute;left:210.5px;top:272.92px;height:21px;line-height:21px;font-size:15px;color:#161616;font-weight:normal;white-space:nowrap;">3</div><div style="position:absolute;left:210.5px;top:301.63px;height:21px;line-height:21px;font-size:15px;color:#161616;font-weight:normal;white-space:nowrap;">4</div><div style="position:absolute;left:210.5px;top:330.34000000000003px;height:21px;line-height:21px;font-size:15px;color:#161616;font-weight:normal;white-space:nowrap;">5</div><div style="position:absolute;left:210.5px;top:359.05px;height:21px;line-height:21px;font-size:15px;color:#161616;font-weight:normal;white-space:nowrap;">6</div><div style="position:absolute;left:210.5px;top:387.76px;height:21px;line-height:21px;font-size:15px;color:#161616;font-weight:normal;white-space:nowrap;">7</div><div style="position:absolute;left:210.5px;top:416.47px;height:21px;line-height:21px;font-size:15px;color:#161616;font-weight:normal;white-space:nowrap;">8</div><div style="position:absolute;left:210.5px;top:445.18px;height:21px;line-height:21px;font-size:15px;color:#161616;font-weight:normal;white-space:nowrap;">9</div><div style="position:absolute;left:206.5px;top:473.89px;height:21px;line-height:21px;font-size:15px;color:#161616;font-weight:normal;white-space:nowrap;">10</div><div style="position:absolute;left:206.5px;top:502.6px;height:21px;line-height:21px;font-size:15px;color:#161616;font-weight:normal;white-space:nowrap;">11</div><div style="position:absolute;left:206.5px;top:531.31px;height:21px;line-height:21px;font-size:15px;color:#161616;font-weight:normal;white-space:nowrap;">12</div><div style="position:absolute;left:206.5px;top:560.02px;height:21px;line-height:21px;font-size:15px;color:#161616;font-weight:normal;white-space:nowrap;">13</div><div style="position:absolute;left:206.5px;top:588.73px;height:21px;line-height:21px;font-size:15px;color:#161616;font-weight:normal;white-space:nowrap;">14</div><div style="position:absolute;left:206.5px;top:617.44px;height:21px;line-height:21px;font-size:15px;color:#161616;font-weight:normal;white-space:nowrap;">15</div><div style="position:absolute;left:206.5px;top:646.1500000000001px;height:21px;line-height:21px;font-size:15px;color:#161616;font-weight:normal;white-space:nowrap;">16</div><div style="position:absolute;left:206.5px;top:674.86px;height:21px;line-height:21px;font-size:15px;color:#161616;font-weight:normal;white-space:nowrap;">17</div><div style="position:absolute;left:206.5px;top:703.5699999999999px;height:21px;line-height:21px;font-size:15px;color:#161616;font-weight:normal;white-space:nowrap;">18</div><div style="position:absolute;left:206.5px;top:732.28px;height:21px;line-height:21px;font-size:15px;color:#161616;font-weight:normal;white-space:nowrap;">19</div><div style="position:absolute;left:206.5px;top:760.99px;height:21px;line-height:21px;font-size:15px;color:#161616;font-weight:normal;white-space:nowrap;">20</div><div style="position:absolute;left:206.5px;top:789.7px;height:21px;line-height:21px;font-size:15px;color:#161616;font-weight:normal;white-space:nowrap;">21</div><div style="position:absolute;left:206.5px;top:818.41px;height:21px;line-height:21px;font-size:15px;color:#161616;font-weight:normal;white-space:nowrap;">22</div><div style="position:absolute;left:196px;top:845px;width:1724px;height:57px;box-sizing:border-box;background:#606060;"></div><div style="position:absolute;left:196px;top:873px;width:1724px;height:1px;box-sizing:border-box;border-top:1px dotted #5a5a5a;"></div><div style="position:absolute;left:234px;top:845px;width:1px;height:57px;box-sizing:border-box;border-left:1px dotted #5a5a5a;"></div><div style="position:absolute;left:269px;top:845px;width:1px;height:57px;box-sizing:border-box;border-left:1px dotted #5a5a5a;"></div><div style="position:absolute;left:330px;top:845px;width:1px;height:57px;box-sizing:border-box;border-left:1px dotted #5a5a5a;"></div><div style="position:absolute;left:430px;top:845px;width:1px;height:57px;box-sizing:border-box;border-left:1px dotted #5a5a5a;"></div><div style="position:absolute;left:480px;top:845px;width:1px;height:57px;box-sizing:border-box;border-left:1px dotted #5a5a5a;"></div><div style="position:absolute;left:555px;top:845px;width:1px;height:57px;box-sizing:border-box;border-left:1px dotted #5a5a5a;"></div><div style="position:absolute;left:643px;top:845px;width:1px;height:57px;box-sizing:border-box;border-left:1px dotted #5a5a5a;"></div><div style="position:absolute;left:743px;top:845px;width:1px;height:57px;box-sizing:border-box;border-left:1px dotted #5a5a5a;"></div><div style="position:absolute;left:993px;top:845px;width:1px;height:57px;box-sizing:border-box;border-left:1px dotted #5a5a5a;"></div><div style="position:absolute;left:1080px;top:845px;width:1px;height:57px;box-sizing:border-box;border-left:1px dotted #5a5a5a;"></div><div style="position:absolute;left:1330px;top:845px;width:1px;height:57px;box-sizing:border-box;border-left:1px dotted #5a5a5a;"></div><div style="position:absolute;left:1580px;top:845px;width:1px;height:57px;box-sizing:border-box;border-left:1px dotted #5a5a5a;"></div><div style="position:absolute;left:1705px;top:845px;width:1px;height:57px;box-sizing:border-box;border-left:1px dotted #5a5a5a;"></div><div style="position:absolute;left:1768px;top:845px;width:1px;height:57px;box-sizing:border-box;border-left:1px dotted #5a5a5a;"></div><div style="position:absolute;left:1830px;top:845px;width:1px;height:57px;box-sizing:border-box;border-left:1px dotted #5a5a5a;"></div><div style="position:absolute;left:487px;top:846.5px;height:21px;line-height:21px;font-size:15px;color:#161616;font-weight:normal;white-space:nowrap;">合计22条</div><div style="position:absolute;left:1587px;top:846.5px;height:21px;line-height:21px;font-size:15px;color:#161616;font-weight:normal;white-space:nowrap;">45460.33</div><div style="position:absolute;left:1712px;top:846.5px;height:21px;line-height:21px;font-size:15px;color:#161616;font-weight:normal;white-space:nowrap;">RMB</div><div style="position:absolute;left:1837px;top:846.5px;height:21px;line-height:21px;font-size:15px;color:#161616;font-weight:normal;white-space:nowrap;">26,284.19</div><div style="position:absolute;left:198px;top:874.5px;height:21px;line-height:21px;font-size:15px;color:#161616;font-weight:normal;white-space:nowrap;">汇总:</div><div style="position:absolute;left:487px;top:874.5px;height:21px;line-height:21px;font-size:15px;color:#161616;font-weight:normal;white-space:nowrap;">合计2条</div><div style="position:absolute;left:1587px;top:874.5px;height:21px;line-height:21px;font-size:15px;color:#161616;font-weight:normal;white-space:nowrap;">1096.92</div><div style="position:absolute;left:1712px;top:874.5px;height:21px;line-height:21px;font-size:15px;color:#161616;font-weight:normal;white-space:nowrap;">USD</div><div style="position:absolute;left:1837px;top:874.5px;height:21px;line-height:21px;font-size:15px;color:#161616;font-weight:normal;white-space:nowrap;">0</div><div style="position:absolute;left:1908px;top:211px;width:12px;height:634px;box-sizing:border-box;background:#5f5f5f;"></div><div style="position:absolute;left:1909px;top:212px;width:10px;height:553px;box-sizing:border-box;background:#474747;border-radius:5px;"></div>
<div style="position:absolute;left:196px;top:49px;width:9px;height:853px;background:linear-gradient(90deg,rgba(0,0,0,.16),rgba(0,0,0,.07) 45%,rgba(0,0,0,0))"></div>
<div style="position:absolute;left:215px;top:224px;width:1690px;height:632px;box-sizing:border-box;background:#fff;border-radius:8px;box-shadow:0 3px 16px rgba(0,0,0,.42);"></div><div style="position:absolute;left:240px;top:230.0px;height:21px;line-height:21px;font-size:15px;color:#222;font-weight:normal;white-space:nowrap;">凭证</div><div style="position:absolute;left:1867px;top:233px;width:18px;height:18px;box-sizing:border-box;border:1px solid #d98a66;border-radius:4px;background:linear-gradient(#f5b89c,#e88a62);"><svg width="16" height="16" viewBox="0 0 16 16" style="position:absolute;left:0;top:0"><path d="M4.300 4.300 11.700 11.700M11.700 4.300 4.300 11.700" stroke="#fff" stroke-width="2.400" stroke-linecap="round"/></svg></div><div style="position:absolute;left:215px;top:257px;width:1690px;height:11px;box-sizing:border-box;background:linear-gradient(#dcdcdc,#f3f3f3 55%,#fff);"></div><div style="position:absolute;left:1880px;top:266px;width:25px;height:36px;box-sizing:border-box;background:linear-gradient(#f1f1f1,#fff);border-radius:0;"></div><div style="position:absolute;left:229px;top:270px;width:85px;height:33px;box-sizing:border-box;background:#24748f;border-radius:3px;"></div><svg style="position:absolute;left:237px;top:280px;overflow:visible" width="14" height="14" viewBox="0 0 16 16" ><path d="M8 .3a7.700 7.700 0 1 0 0 15.400A7.700 7.700 0 1 0 8 .3z M7 3.500h2v3.500h3.500v2H9v3.500H7V9H3.500V7H7z" fill="#fff" fill-rule="evenodd"/></svg><div style="position:absolute;left:261px;top:275.5px;height:21px;line-height:21px;font-size:15px;color:#fff;font-weight:bold;white-space:nowrap;">添加行</div><div style="position:absolute;left:320px;top:270px;width:86px;height:33px;box-sizing:border-box;background:#c9302c;border-radius:3px;"></div><svg style="position:absolute;left:329px;top:279.5px;overflow:visible" width="14" height="15" viewBox="0 0 14 15" ><path d="M.5 3h13M4.800 3V1.300h4.400V3" fill="none" stroke="#fff" stroke-width="1.400"/><path d="M2 3.200v9.500c0 .8.600 1.400 1.400 1.400h7.200c.8 0 1.400-.6 1.400-1.400V3.200" fill="none" stroke="#fff" stroke-width="1.400"/><path d="M5 5.500v6M7 5.500v6M9 5.500v6" stroke="#fff" stroke-width="1.100"/></svg><div style="position:absolute;left:352px;top:275.5px;height:21px;line-height:21px;font-size:15px;color:#fff;font-weight:bold;white-space:nowrap;">删除行</div><div style="position:absolute;left:411px;top:269px;width:102px;height:35px;box-sizing:border-box;background:#f8f8f8;border-radius:3px;border:1px solid #d8d8d8;"></div><svg style="position:absolute;left:419px;top:280px;overflow:visible" width="17" height="14" viewBox="0 0 17 14" ><rect x=".8" y=".8" width="15.400" height="12.400" rx="1.400" fill="none" stroke="#333" stroke-width="1.400"/><rect x=".8" y=".8" width="15.400" height="2.600" fill="#333"/><path d="M3 5.800h1.300M5.600 5.800h8.400M3 8.200h1.300M5.600 8.200h8.400M3 10.600h1.300M5.600 10.600h8.400" stroke="#333" stroke-width="1"/></svg><div style="position:absolute;left:444px;top:275.5px;height:21px;line-height:21px;font-size:15px;color:#333;font-weight:normal;white-space:nowrap;">试算平衡</div><div style="position:absolute;left:518px;top:269px;width:102px;height:35px;box-sizing:border-box;background:#fafafa;border-radius:3px;border:1px solid #e4e4e4;"></div><svg style="position:absolute;left:526px;top:279px;overflow:visible" width="18" height="15" viewBox="0 0 18 15" ><path d="M.4 1.400C.4.800.8.400 1.400.400h4.800c.5 0 1.100.3 1.500.6l6.300 6.300c.5.500.5 1.200 0 1.700l-4.700 4.700c-.5.500-1.200.5-1.700 0L1.300 7.400C.9 7 .4 6.300.4 5.800z M3.300 2.200a1.100 1.100 0 1 0 0 2.200 1.100 1.100 0 1 0 0-2.200z" fill="#b5b5b5" fill-rule="evenodd"/><path d="M9 .4h1.400c.5 0 1.100.3 1.500.6l6.300 6.300c.5.500.5 1.200 0 1.700l-4.700 4.700c-.5.500-1.200.5-1.700 0l-.4-.4 4.900-4.900c.5-.5.5-1.200 0-1.700z" fill="#b5b5b5"/></svg><div style="position:absolute;left:551px;top:275.5px;height:21px;line-height:21px;font-size:15px;color:#b0b0b0;font-weight:normal;white-space:nowrap;">审核凭证</div><div style="position:absolute;left:625px;top:270px;width:101px;height:33px;box-sizing:border-box;background:#16a7e9;border-radius:3px;"></div><svg style="position:absolute;left:633px;top:279px;overflow:visible" width="16" height="15" viewBox="0 0 16 15" ><path d="M8 .2 13 5.300h-3v4.500H6V5.300H3z" fill="#fff"/><path d="M.5 10.400h4.200v.6c0 .6.500 1 1 1h4.600c.6 0 1-.5 1-1v-.6h4.200c.3 0 .5.200.5.500v3.400c0 .3-.2.500-.5.500H.5c-.3 0-.5-.2-.5-.5v-3.400c0-.3.200-.5.500-.5z" fill="#fff"/></svg><div style="position:absolute;left:657px;top:275.5px;height:21px;line-height:21px;font-size:15px;color:#fff;font-weight:bold;white-space:nowrap;">上传附件</div><div style="position:absolute;left:732px;top:270px;width:101px;height:33px;box-sizing:border-box;background:#449d44;border-radius:3px;"></div><svg style="position:absolute;left:740px;top:279px;overflow:visible" width="15" height="15" viewBox="0 0 15 15" ><path d="M1.600.8h9.600l3 3v9.600c0 .4-.400.800-.800.800H1.600c-.4 0-.8-.4-.8-.8V1.600c0-.4.400-.8.800-.8z" fill="none" stroke="#fff" stroke-width="1.500"/><path d="M3.800 1v3.600h6V1M3.800 14V9.400h7.400V14" fill="none" stroke="#fff" stroke-width="1.400"/></svg><div style="position:absolute;left:764px;top:275.5px;height:21px;line-height:21px;font-size:15px;color:#fff;font-weight:bold;white-space:nowrap;">提交保存</div><div style="position:absolute;left:896.5px;top:276.5px;height:30px;line-height:30px;font-size:25px;color:#1c1c1c;font-weight:300;white-space:nowrap;text-shadow:1px 1px 2px rgba(0,0,0,.25);">记账凭证</div><div style="position:absolute;left:1026px;top:285px;width:60px;height:25px;box-sizing:border-box;border:1px solid #ddd;border-radius:3px;background:#fff;"></div><div style="position:absolute;left:1032px;top:286.0px;height:21px;line-height:21px;font-size:15px;color:#333;font-weight:normal;white-space:nowrap;">2022</div><div style="position:absolute;left:228px;top:318.5px;height:21px;line-height:21px;font-size:15px;color:#222;font-weight:normal;white-space:nowrap;">制单人</div><div style="position:absolute;left:277px;top:314px;width:75px;height:34px;box-sizing:border-box;border:1px solid #cecece;border-radius:3px;background:#fff;"></div><div style="position:absolute;left:283px;top:319.5px;height:21px;line-height:21px;font-size:15px;color:#222;font-weight:normal;white-space:nowrap;">阿轩测试</div><div style="position:absolute;left:368px;top:318.5px;height:21px;line-height:21px;font-size:15px;color:#222;font-weight:normal;white-space:nowrap;">凭证字</div><div style="position:absolute;left:418px;top:314px;width:87px;height:34px;box-sizing:border-box;border:1px solid #cecece;border-radius:3px;background:#fff;"></div><div style="position:absolute;left:424px;top:319.5px;height:21px;line-height:21px;font-size:15px;color:#222;font-weight:normal;white-space:nowrap;">收</div><svg style="position:absolute;left:482px;top:328px;overflow:visible" width="12" height="7" viewBox="0 0 12 7" ><path d="M0 0H12L6.0 7z" fill="#b0b0b0"/></svg><div style="position:absolute;left:509px;top:314px;width:88px;height:34px;box-sizing:border-box;border:1px solid #cecece;border-radius:3px;background:#fff;"></div><div style="position:absolute;left:515px;top:319.5px;height:21px;line-height:21px;font-size:15px;color:#bdbdbd;font-weight:normal;white-space:nowrap;">系统生成号</div><div style="position:absolute;left:613px;top:318.5px;height:21px;line-height:21px;font-size:15px;color:#222;font-weight:normal;white-space:nowrap;">收付编号</div><div style="position:absolute;left:673px;top:314px;width:150px;height:34px;box-sizing:border-box;border:1px solid #cecece;border-radius:3px;background:#fff;"></div><div style="position:absolute;left:679px;top:319.5px;height:21px;line-height:21px;font-size:15px;color:#bdbdbd;font-weight:normal;white-space:nowrap;">系统销账生成</div><div style="position:absolute;left:841px;top:318.5px;height:21px;line-height:21px;font-size:15px;color:#222;font-weight:normal;white-space:nowrap;">日期</div><div style="position:absolute;left:870px;top:314px;width:125px;height:34px;box-sizing:border-box;border:1px solid #cecece;border-radius:3px;background:#fff;"></div><div style="position:absolute;left:876px;top:319.5px;height:21px;line-height:21px;font-size:15px;color:#222;font-weight:normal;white-space:nowrap;">2022-03-01</div><svg style="position:absolute;left:969px;top:321px;overflow:visible" width="18.5" height="20.041666666666668" viewBox="0 0 18 19.500" ><rect x=".6" y="1.800" width="16.800" height="16.600" rx="1.300" fill="#ffffff" stroke="#c9cccf" stroke-width="1.100"/><path d="M1.200 18.700h15.600" stroke="#c2c2c2" stroke-width="1.100"/><path d="M.6 5.200V3.100c0-.700.600-1.300 1.300-1.300h14.200c.700 0 1.300.600 1.300 1.300v2.100z" fill="#f5866b"/><rect x="4.200" y=".2" width="1.700" height="3.600" rx=".5" fill="#9fb2c2"/><rect x="12.100" y=".2" width="1.700" height="3.600" rx=".5" fill="#9fb2c2"/><text x="8.700" y="14.300" font-family="Liberation Sans, sans-serif" font-size="9" font-weight="bold" text-anchor="middle" fill="#7a7a7a">15</text></svg><div style="position:absolute;left:1012px;top:318.5px;height:21px;line-height:21px;font-size:15px;color:#222;font-weight:normal;white-space:nowrap;">凭证编号</div><div style="position:absolute;left:225px;top:365px;width:1655px;height:58px;box-sizing:border-box;background:linear-gradient(#fbfbfb,#ececec);border-top:1px solid #ddd;border-bottom:1px solid #cfcfcf;"></div><div style="position:absolute;left:225px;top:423px;width:36px;height:94px;box-sizing:border-box;background:repeating-linear-gradient(#fafafa 0,#eeeeee 47px);"></div><div style="position:absolute;left:261px;top:423px;width:1550px;height:47px;box-sizing:border-box;background:#ffe48f;"></div><div style="position:absolute;left:225px;top:470px;width:1590px;height:1px;box-sizing:border-box;background:#cfcfcf;"></div><div style="position:absolute;left:225px;top:517px;width:1590px;height:1px;box-sizing:border-box;background:#cfcfcf;"></div><div style="position:absolute;left:1815px;top:518px;width:65px;height:1px;box-sizing:border-box;background:#dedede;"></div><div style="position:absolute;left:225px;top:519px;width:1590px;height:48px;box-sizing:border-box;background:linear-gradient(#f9f9f9,#ececec);border-bottom:1px solid #cfcfcf;"></div><div style="position:absolute;left:261px;top:365px;width:1px;height:202px;box-sizing:border-box;background:#cfcfcf;"></div><div style="position:absolute;left:449px;top:365px;width:1px;height:202px;box-sizing:border-box;background:#cfcfcf;"></div><div style="position:absolute;left:636px;top:365px;width:1px;height:202px;box-sizing:border-box;background:#cfcfcf;"></div><div style="position:absolute;left:823px;top:365px;width:1px;height:202px;box-sizing:border-box;background:#cfcfcf;"></div><div style="position:absolute;left:923px;top:365px;width:1px;height:202px;box-sizing:border-box;background:#cfcfcf;"></div><div style="position:absolute;left:1010px;top:365px;width:1px;height:202px;box-sizing:border-box;background:#cfcfcf;"></div><div style="position:absolute;left:267px;top:382.5px;height:21px;line-height:21px;font-size:15px;color:#111;font-weight:bold;white-space:nowrap;">摘要</div><div style="position:absolute;left:455px;top:382.5px;height:21px;line-height:21px;font-size:15px;color:#111;font-weight:bold;white-space:nowrap;">会计科目</div><div style="position:absolute;left:642px;top:382.5px;height:21px;line-height:21px;font-size:15px;color:#111;font-weight:bold;white-space:nowrap;">辅助</div><div style="position:absolute;left:829px;top:382.5px;height:21px;line-height:21px;font-size:15px;color:#111;font-weight:bold;white-space:nowrap;">原币别</div><div style="position:absolute;left:929px;top:382.5px;height:21px;line-height:21px;font-size:15px;color:#111;font-weight:bold;white-space:nowrap;">原币兑换率</div><div style="position:absolute;left:1016px;top:382.5px;height:21px;line-height:21px;font-size:15px;color:#111;font-weight:bold;white-space:nowrap;">原金额</div><div style="position:absolute;left:239px;top:436.5px;height:22px;line-height:22px;font-size:16px;color:#111;font-weight:bold;white-space:nowrap;">1</div><div style="position:absolute;left:238px;top:484.0px;height:22px;line-height:22px;font-size:16px;color:#111;font-weight:bold;white-space:nowrap;">2</div><div style="position:absolute;left:226px;top:530.5px;height:21px;line-height:21px;font-size:15px;color:#666;font-weight:normal;white-space:nowrap;">汇总:</div><div style="position:absolute;left:450px;top:432px;width:186px;height:29px;box-sizing:border-box;border:1px solid #3c7ce0;border-radius:3px;background:#fff;box-shadow:0 0 2px rgba(60,124,224,.5);"></div><svg style="position:absolute;left:612px;top:443.5px;overflow:visible" width="12" height="7" viewBox="0 0 12 7" ><path d="M0 0H12L6.0 7z" fill="#a9a9a9"/></svg>
<div style="position:absolute;left:450px;top:461px;width:500px;height:375px;box-sizing:border-box;background:#fff;box-shadow:0 6px 22px rgba(0,0,0,.30);"></div><div style="position:absolute;left:452px;top:462px;width:55px;height:37px;box-sizing:border-box;background:linear-gradient(#ffe375,#ffdc52);border:1px solid #c98a2a;border-radius:4px;"></div><div style="position:absolute;left:464px;top:468.5px;height:21px;line-height:21px;font-size:15px;color:#222;font-weight:normal;white-space:nowrap;">全部</div><div style="position:absolute;left:509px;top:466px;width:1px;height:30px;box-sizing:border-box;background:#ddd;"></div><div style="position:absolute;left:566px;top:466px;width:1px;height:30px;box-sizing:border-box;background:#ddd;"></div><div style="position:absolute;left:624px;top:466px;width:1px;height:30px;box-sizing:border-box;background:#ddd;"></div><div style="position:absolute;left:681px;top:466px;width:1px;height:30px;box-sizing:border-box;background:#ddd;"></div><div style="position:absolute;left:739px;top:466px;width:1px;height:30px;box-sizing:border-box;background:#ddd;"></div><div style="position:absolute;left:796px;top:466px;width:1px;height:30px;box-sizing:border-box;background:#ddd;"></div><div style="position:absolute;left:523px;top:468.5px;height:21px;line-height:21px;font-size:15px;color:#555;font-weight:normal;white-space:nowrap;">资产</div><div style="position:absolute;left:581px;top:468.5px;height:21px;line-height:21px;font-size:15px;color:#555;font-weight:normal;white-space:nowrap;">负债</div><div style="position:absolute;left:638px;top:468.5px;height:21px;line-height:21px;font-size:15px;color:#555;font-weight:normal;white-space:nowrap;">权益</div><div style="position:absolute;left:695px;top:468.5px;height:21px;line-height:21px;font-size:15px;color:#555;font-weight:normal;white-space:nowrap;">成本</div><div style="position:absolute;left:753px;top:468.5px;height:21px;line-height:21px;font-size:15px;color:#555;font-weight:normal;white-space:nowrap;">损益</div><div style="position:absolute;left:811px;top:468.5px;height:21px;line-height:21px;font-size:15px;color:#555;font-weight:normal;white-space:nowrap;">科目设置</div><div style="position:absolute;left:450px;top:507px;width:500px;height:60px;box-sizing:border-box;background:linear-gradient(#fafafa,#f0f0f0);border-top:1px solid #e3e3e3;"></div><div style="position:absolute;left:549px;top:508px;width:249px;height:28px;box-sizing:border-box;background:#e8f0fe;"></div><div style="position:absolute;left:455px;top:510.5px;height:21px;line-height:21px;font-size:15px;color:#111;font-weight:bold;white-space:nowrap;">科目编号</div><div style="position:absolute;left:554px;top:510.5px;height:21px;line-height:21px;font-size:15px;color:#111;font-weight:bold;white-space:nowrap;">科目</div><div style="position:absolute;left:804px;top:510.5px;height:21px;line-height:21px;font-size:15px;color:#111;font-weight:bold;white-space:nowrap;">方向</div><div style="position:absolute;left:854px;top:510.5px;height:21px;line-height:21px;font-size:15px;color:#111;font-weight:bold;white-space:nowrap;">币种</div><div style="position:absolute;left:450px;top:537px;width:98px;height:30px;box-sizing:border-box;border:1px solid #9fbfe8;background:#fff;"></div><div style="position:absolute;left:549px;top:537px;width:249px;height:30px;box-sizing:border-box;border:1px solid #9fbfe8;background:#fff;"></div><div style="position:absolute;left:799px;top:537px;width:49px;height:30px;box-sizing:border-box;border:1px solid #9fbfe8;background:#fff;"></div><div style="position:absolute;left:849px;top:537px;width:49px;height:30px;box-sizing:border-box;border:1px solid #9fbfe8;background:#fff;"></div><div style="position:absolute;left:450px;top:567px;width:500px;height:269px;overflow:hidden"><div style="position:absolute;left:4.5px;top:13.0px;height:21px;line-height:21px;font-size:15px;color:#2db5f5;font-weight:bold;white-space:nowrap;-webkit-text-stroke:0.75px #2db5f5;transform:scaleX(1.17);transform-origin:0 50%;">1001</div><div style="position:absolute;left:104px;top:13.5px;height:21px;line-height:21px;font-size:15px;color:#2db5f5;font-weight:bold;white-space:nowrap;">库存现金</div><div style="position:absolute;left:354px;top:13.5px;height:21px;line-height:21px;font-size:15px;color:#2db5f5;font-weight:bold;white-space:nowrap;">借方</div><div style="position:absolute;left:0px;top:48px;width:448px;height:1px;box-sizing:border-box;background:#d0d0d0;"></div><div style="position:absolute;left:4.5px;top:60.599999999999994px;height:21px;line-height:21px;font-size:15px;color:#2db5f5;font-weight:bold;white-space:nowrap;-webkit-text-stroke:0.75px #2db5f5;transform:scaleX(1.17);transform-origin:0 50%;">100111</div><div style="position:absolute;left:104px;top:61.099999999999994px;height:21px;line-height:21px;font-size:15px;color:#2db5f5;font-weight:bold;white-space:nowrap;">人民币</div><div style="position:absolute;left:354px;top:61.099999999999994px;height:21px;line-height:21px;font-size:15px;color:#2db5f5;font-weight:bold;white-space:nowrap;">借方</div><div style="position:absolute;left:403px;top:60.599999999999994px;height:21px;line-height:21px;font-size:15px;color:#2db5f5;font-weight:bold;white-space:nowrap;-webkit-text-stroke:0.7px #2db5f5;transform:scaleX(1.1);transform-origin:0 50%;">RMB</div><div style="position:absolute;left:0px;top:96px;width:448px;height:1px;box-sizing:border-box;background:#d0d0d0;"></div><div style="position:absolute;left:4.5px;top:108.2px;height:21px;line-height:21px;font-size:15px;color:#2db5f5;font-weight:bold;white-space:nowrap;-webkit-text-stroke:0.75px #2db5f5;transform:scaleX(1.17);transform-origin:0 50%;">100112</div><div style="position:absolute;left:104px;top:108.7px;height:21px;line-height:21px;font-size:15px;color:#2db5f5;font-weight:bold;white-space:nowrap;">股期债券</div><div style="position:absolute;left:354px;top:108.7px;height:21px;line-height:21px;font-size:15px;color:#2db5f5;font-weight:bold;white-space:nowrap;">借方</div><div style="position:absolute;left:403px;top:108.2px;height:21px;line-height:21px;font-size:15px;color:#2db5f5;font-weight:bold;white-space:nowrap;-webkit-text-stroke:0.7px #2db5f5;transform:scaleX(1.1);transform-origin:0 50%;">USD</div><div style="position:absolute;left:0px;top:143px;width:448px;height:1px;box-sizing:border-box;background:#d0d0d0;"></div><div style="position:absolute;left:4.5px;top:155.8px;height:21px;line-height:21px;font-size:15px;color:#2db5f5;font-weight:bold;white-space:nowrap;-webkit-text-stroke:0.75px #2db5f5;transform:scaleX(1.17);transform-origin:0 50%;">100199</div><div style="position:absolute;left:103.5px;top:155.8px;height:21px;line-height:21px;font-size:15px;color:#2db5f5;font-weight:bold;white-space:nowrap;-webkit-text-stroke:0.75px #2db5f5;transform:scaleX(1.17);transform-origin:0 50%;">99</div><div style="position:absolute;left:354px;top:156.3px;height:21px;line-height:21px;font-size:15px;color:#2db5f5;font-weight:bold;white-space:nowrap;">借方</div><div style="position:absolute;left:403px;top:155.8px;height:21px;line-height:21px;font-size:15px;color:#2db5f5;font-weight:bold;white-space:nowrap;-webkit-text-stroke:0.7px #2db5f5;transform:scaleX(1.1);transform-origin:0 50%;">JPY</div><div style="position:absolute;left:0px;top:191px;width:448px;height:1px;box-sizing:border-box;background:#d0d0d0;"></div><div style="position:absolute;left:4.5px;top:203.4px;height:21px;line-height:21px;font-size:15px;color:#2db5f5;font-weight:bold;white-space:nowrap;-webkit-text-stroke:0.75px #2db5f5;transform:scaleX(1.17);transform-origin:0 50%;">1002</div><div style="position:absolute;left:104px;top:203.9px;height:21px;line-height:21px;font-size:15px;color:#2db5f5;font-weight:bold;white-space:nowrap;">银行存款</div><div style="position:absolute;left:354px;top:203.9px;height:21px;line-height:21px;font-size:15px;color:#2db5f5;font-weight:bold;white-space:nowrap;">借方</div><div style="position:absolute;left:0px;top:238px;width:448px;height:1px;box-sizing:border-box;background:#d0d0d0;"></div><div style="position:absolute;left:4.5px;top:251.0px;height:21px;line-height:21px;font-size:15px;color:#2db5f5;font-weight:bold;white-space:nowrap;-webkit-text-stroke:0.75px #2db5f5;transform:scaleX(1.17);transform-origin:0 50%;">100201</div><div style="position:absolute;left:104px;top:251.5px;height:21px;line-height:21px;font-size:15px;color:#2db5f5;font-weight:bold;white-space:nowrap;">招行</div><div style="position:absolute;left:354px;top:251.5px;height:21px;line-height:21px;font-size:15px;color:#2db5f5;font-weight:bold;white-space:nowrap;">借方</div><div style="position:absolute;left:403px;top:251.0px;height:21px;line-height:21px;font-size:15px;color:#2db5f5;font-weight:bold;white-space:nowrap;-webkit-text-stroke:0.7px #2db5f5;transform:scaleX(1.1);transform-origin:0 50%;">RMB</div><div style="position:absolute;left:0px;top:286px;width:448px;height:1px;box-sizing:border-box;background:#d0d0d0;"></div><div style="position:absolute;left:98px;top:0px;width:1px;height:269px;box-sizing:border-box;background:#d0d0d0;"></div><div style="position:absolute;left:348px;top:0px;width:1px;height:269px;box-sizing:border-box;background:#d0d0d0;"></div><div style="position:absolute;left:398px;top:0px;width:1px;height:269px;box-sizing:border-box;background:#d0d0d0;"></div><div style="position:absolute;left:448px;top:0px;width:1px;height:269px;box-sizing:border-box;background:#d0d0d0;"></div></div><div style="position:absolute;left:548px;top:507px;width:1px;height:60px;box-sizing:border-box;background:#d0d0d0;"></div><div style="position:absolute;left:798px;top:507px;width:1px;height:60px;box-sizing:border-box;background:#d0d0d0;"></div><div style="position:absolute;left:848px;top:507px;width:1px;height:60px;box-sizing:border-box;background:#d0d0d0;"></div><div style="position:absolute;left:898px;top:507px;width:1px;height:60px;box-sizing:border-box;background:#d0d0d0;"></div><div style="position:absolute;left:940px;top:568px;width:9px;height:50px;box-sizing:border-box;background:#dcdcdc;border-radius:5px;border:1px solid #cfcfcf;"></div>
<div style="position:absolute;left:1073px;top:261px;width:747px;height:595px;box-sizing:border-box;background:#fff;border-radius:3px 3px 0 0;box-shadow:0 1px 10px rgba(0,0,0,.45);"></div><svg style="position:absolute;left:1073px;top:261px" width="747" height="5"><path d="M0 0h4.500C2 .3.300 2 0 4.500z" fill="#4a4a4a"/><path d="M747 0h-4.500c2.500.3 4.200 2 4.500 4.500z" fill="#4a4a4a"/></svg><div style="position:absolute;left:1097px;top:268.0px;height:21px;line-height:21px;font-size:15px;color:#222;font-weight:normal;white-space:nowrap;">添加科目</div><div style="position:absolute;left:1784px;top:270px;width:18px;height:18px;box-sizing:border-box;border:1px solid #d98a66;border-radius:4px;background:linear-gradient(#f5b89c,#e88a62);"><svg width="16" height="16" viewBox="0 0 16 16" style="position:absolute;left:0;top:0"><path d="M4.300 4.300 11.700 11.700M11.700 4.300 4.300 11.700" stroke="#fff" stroke-width="2.400" stroke-linecap="round"/></svg></div><div style="position:absolute;left:1073px;top:294px;width:747px;height:1px;box-sizing:border-box;background:#e8e8e8;"></div><div style="position:absolute;left:1075px;top:296px;width:53px;height:35px;box-sizing:border-box;background:linear-gradient(#ffe375,#ffdc52);border:1px solid #c8892c;border-radius:3px;"></div><div style="position:absolute;left:1086px;top:302.5px;height:21px;line-height:21px;font-size:15px;color:#333;font-weight:normal;white-space:nowrap;">资产</div><div style="position:absolute;left:1131px;top:296px;width:52px;height:35px;box-sizing:border-box;background:#fafafa;border:1px solid #dcdcdc;border-radius:3px;"></div><div style="position:absolute;left:1142px;top:302.5px;height:21px;line-height:21px;font-size:15px;color:#444;font-weight:normal;white-space:nowrap;">负债</div><div style="position:absolute;left:1188px;top:296px;width:52px;height:35px;box-sizing:border-box;background:#fafafa;border:1px solid #dcdcdc;border-radius:3px;"></div><div style="position:absolute;left:1199px;top:302.5px;height:21px;line-height:21px;font-size:15px;color:#444;font-weight:normal;white-space:nowrap;">权益</div><div style="position:absolute;left:1245px;top:296px;width:52px;height:35px;box-sizing:border-box;background:#fafafa;border:1px solid #dcdcdc;border-radius:3px;"></div><div style="position:absolute;left:1256px;top:302.5px;height:21px;line-height:21px;font-size:15px;color:#444;font-weight:normal;white-space:nowrap;">成本</div><div style="position:absolute;left:1301px;top:296px;width:52px;height:35px;box-sizing:border-box;background:#fafafa;border:1px solid #dcdcdc;border-radius:3px;"></div><div style="position:absolute;left:1312px;top:302.5px;height:21px;line-height:21px;font-size:15px;color:#444;font-weight:normal;white-space:nowrap;">损益</div><div style="position:absolute;left:1395px;top:297px;width:68px;height:33px;box-sizing:border-box;background:#24748f;border-radius:3px;"></div><svg style="position:absolute;left:1400.5px;top:306px;overflow:visible" width="14.5" height="14.5" viewBox="0 0 16 16" ><path d="M8 .3a7.700 7.700 0 1 0 0 15.400A7.700 7.700 0 1 0 8 .3z M7 3.500h2v3.500h3.500v2H9v3.500H7V9H3.500V7H7z" fill="#fff" fill-rule="evenodd"/></svg><div style="position:absolute;left:1424px;top:302.5px;height:21px;line-height:21px;font-size:15px;color:#fff;font-weight:bold;white-space:nowrap;">添加</div><div style="position:absolute;left:1469px;top:297px;width:70px;height:33px;box-sizing:border-box;background:#24748f;border-radius:3px;"></div><svg style="position:absolute;left:1477px;top:306px;overflow:visible" width="15" height="15" viewBox="0 0 16 16" ><path d="M2.300 7.200A5.800 5.800 0 0 1 12.600 4.400" fill="none" stroke="#fff" stroke-width="3"/><path d="M15.700.800V7H9.500z" fill="#fff"/><path d="M13.700 8.800A5.800 5.800 0 0 1 3.400 11.600" fill="none" stroke="#fff" stroke-width="3"/><path d="M.300 15.200V9H6.500z" fill="#fff"/></svg><div style="position:absolute;left:1501.5px;top:302.5px;height:21px;line-height:21px;font-size:15px;color:#fff;font-weight:bold;white-space:nowrap;">刷新</div><div style="position:absolute;left:1073px;top:344px;width:747px;height:59px;box-sizing:border-box;background:linear-gradient(#fbfbfb,#f1f1f1);border-top:1px solid #e2e2e2;"></div><div style="position:absolute;left:1073px;top:403px;width:36px;height:453px;box-sizing:border-box;background:repeating-linear-gradient(#fafafa 0,#efefef 35px);"></div><svg style="position:absolute;left:1083px;top:370px;overflow:visible" width="15" height="15" viewBox="0 0 16 16" ><path d="M.6 1.200C.4.800.7.400 1.100.400h13.800c.4 0 .7.400.5.800L10 7.300v7.600c0 .500-.5.800-.900.500L6.500 13.500c-.300-.2-.500-.5-.500-.9V7.300z" fill="#222"/></svg><div style="position:absolute;left:1115px;top:345.5px;height:21px;line-height:21px;font-size:15px;color:#222;font-weight:normal;white-space:nowrap;">科目编号</div><div style="position:absolute;left:1110.5px;top:373px;width:186px;height:30px;box-sizing:border-box;border:1px solid #9fc0ea;background:#fff;"></div><div style="position:absolute;left:1109px;top:344px;width:1px;height:29px;box-sizing:border-box;border-left:1px dotted #d6d6d6;"></div><div style="position:absolute;left:1303px;top:345.5px;height:21px;line-height:21px;font-size:15px;color:#222;font-weight:normal;white-space:nowrap;">科目名称</div><div style="position:absolute;left:1298.5px;top:373px;width:186px;height:30px;box-sizing:border-box;border:1px solid #9fc0ea;background:#fff;"></div><div style="position:absolute;left:1297px;top:344px;width:1px;height:29px;box-sizing:border-box;border-left:1px dotted #d6d6d6;"></div><div style="position:absolute;left:1491px;top:345.5px;height:21px;line-height:21px;font-size:15px;color:#222;font-weight:normal;white-space:nowrap;">类别</div><div style="position:absolute;left:1486.5px;top:373px;width:123px;height:30px;box-sizing:border-box;border:1px solid #9fc0ea;background:#fff;"></div><div style="position:absolute;left:1485px;top:344px;width:1px;height:29px;box-sizing:border-box;border-left:1px dotted #d6d6d6;"></div><div style="position:absolute;left:1616px;top:345.5px;height:21px;line-height:21px;font-size:15px;color:#222;font-weight:normal;white-space:nowrap;">余额方向</div><div style="position:absolute;left:1611.5px;top:373px;width:123px;height:30px;box-sizing:border-box;border:1px solid #9fc0ea;background:#fff;"></div><div style="position:absolute;left:1610px;top:344px;width:1px;height:29px;box-sizing:border-box;border-left:1px dotted #d6d6d6;"></div><div style="position:absolute;left:1741px;top:345.5px;height:21px;line-height:21px;font-size:15px;color:#222;font-weight:normal;white-space:nowrap;">币种</div><div style="position:absolute;left:1736.5px;top:373px;width:83px;height:30px;box-sizing:border-box;border:1px solid #9fc0ea;background:#fff;border-right:none;"></div><div style="position:absolute;left:1735px;top:344px;width:1px;height:29px;box-sizing:border-box;border-left:1px dotted #d6d6d6;"></div><div style="position:absolute;left:1111px;top:403px;width:700px;height:35px;box-sizing:border-box;background:#ffe48f;"></div><div style="position:absolute;left:1073px;top:403px;width:747px;height:445px;overflow:hidden"><div style="position:absolute;left:13px;top:6.0px;height:21px;line-height:21px;font-size:15px;color:#222;font-weight:normal;white-space:nowrap;">1</div><svg style="position:absolute;left:49.5px;top:10.5px;overflow:visible" width="8" height="14" viewBox="0 0 8 14" ><path d="M1.300 1 6.500 7 1.300 13" fill="none" stroke="#4a4a4a" stroke-width="1.800"/></svg><svg style="position:absolute;left:63px;top:9.8px;overflow:visible" width="19" height="16" viewBox="0 0 19 16" ><defs><linearGradient id="fg1" x1="0" y1="0" x2="0" y2="1"><stop offset="0" stop-color="#fff3b0"/><stop offset="1" stop-color="#fad25a"/></linearGradient></defs><path d="M.6 2.100C.6 1.300 1.200.700 2 .700h4.300c.5 0 .9.200 1.200.600l.800 1h9.300c.600 0 1 .400 1 1V14.200c0 .600-.400 1-1 1H1.600c-.600 0-1-.400-1-1z" fill="url(#fg1)" stroke="#d9962e" stroke-width="1.300"/><path d="M1.500 3.600h5.200l1.300 1.500h9.600" fill="none" stroke="#fffbe6" stroke-width="1"/><path d="M1.500 8.300h5.500" fill="none" stroke="#fffbe6" stroke-width="1"/></svg><div style="position:absolute;left:86px;top:6.0px;height:21px;line-height:21px;font-size:15px;color:#222;font-weight:normal;white-space:nowrap;">1001</div><div style="position:absolute;left:230px;top:6.0px;height:21px;line-height:21px;font-size:15px;color:#222;font-weight:normal;white-space:nowrap;">库存现金</div><div style="position:absolute;left:418px;top:6.0px;height:21px;line-height:21px;font-size:15px;color:#222;font-weight:normal;white-space:nowrap;">资产</div><div style="position:absolute;left:543px;top:6.0px;height:21px;line-height:21px;font-size:15px;color:#222;font-weight:normal;white-space:nowrap;">借方</div><div style="position:absolute;left:13px;top:41.0px;height:21px;line-height:21px;font-size:15px;color:#222;font-weight:normal;white-space:nowrap;">5</div><svg style="position:absolute;left:49.5px;top:45.5px;overflow:visible" width="8" height="14" viewBox="0 0 8 14" ><path d="M1.300 1 6.500 7 1.300 13" fill="none" stroke="#4a4a4a" stroke-width="1.800"/></svg><svg style="position:absolute;left:63px;top:44.8px;overflow:visible" width="19" height="16" viewBox="0 0 19 16" ><defs><linearGradient id="fg2" x1="0" y1="0" x2="0" y2="1"><stop offset="0" stop-color="#fff3b0"/><stop offset="1" stop-color="#fad25a"/></linearGradient></defs><path d="M.6 2.100C.6 1.300 1.200.700 2 .700h4.300c.5 0 .9.200 1.200.600l.800 1h9.300c.600 0 1 .400 1 1V14.200c0 .600-.400 1-1 1H1.600c-.600 0-1-.400-1-1z" fill="url(#fg2)" stroke="#d9962e" stroke-width="1.300"/><path d="M1.500 3.600h5.200l1.300 1.500h9.600" fill="none" stroke="#fffbe6" stroke-width="1"/><path d="M1.500 8.300h5.500" fill="none" stroke="#fffbe6" stroke-width="1"/></svg><div style="position:absolute;left:86px;top:41.0px;height:21px;line-height:21px;font-size:15px;color:#222;font-weight:normal;white-space:nowrap;">1002</div><div style="position:absolute;left:230px;top:41.0px;height:21px;line-height:21px;font-size:15px;color:#222;font-weight:normal;white-space:nowrap;">银行存款</div><div style="position:absolute;left:0px;top:35px;width:738px;height:1px;box-sizing:border-box;border-top:1px dotted #cfcfcf;"></div><div style="position:absolute;left:8.5px;top:76.0px;height:21px;line-height:21px;font-size:15px;color:#222;font-weight:normal;white-space:nowrap;">12</div><svg style="position:absolute;left:65.29999999999995px;top:78.0px;overflow:visible" width="17" height="20" viewBox="0 0 17 20" ><rect x="1" y="1" width="15" height="18" rx="1.200" fill="#fdfdfd" stroke="#c4c4c4" stroke-width="1.600"/><path d="M1.200 19.300h14.800" stroke="#b0b0b0" stroke-width="1"/><path d="M4 4.700h9M4 7.500h9M4 10.300h9M4 13.100h9M4 15.900h9" stroke="#8fadd2" stroke-width="1.400"/></svg><div style="position:absolute;left:86px;top:76.0px;height:21px;line-height:21px;font-size:15px;color:#222;font-weight:normal;white-space:nowrap;">1012</div><div style="position:absolute;left:230px;top:76.0px;height:21px;line-height:21px;font-size:15px;color:#222;font-weight:normal;white-space:nowrap;">其他货币资金</div><div style="position:absolute;left:0px;top:70px;width:738px;height:1px;box-sizing:border-box;border-top:1px dotted #cfcfcf;"></div><div style="position:absolute;left:8.5px;top:111.0px;height:21px;line-height:21px;font-size:15px;color:#222;font-weight:normal;white-space:nowrap;">13</div><svg style="position:absolute;left:49.5px;top:115.5px;overflow:visible" width="8" height="14" viewBox="0 0 8 14" ><path d="M1.300 1 6.500 7 1.300 13" fill="none" stroke="#4a4a4a" stroke-width="1.800"/></svg><svg style="position:absolute;left:63px;top:114.8px;overflow:visible" width="19" height="16" viewBox="0 0 19 16" ><defs><linearGradient id="fg3" x1="0" y1="0" x2="0" y2="1"><stop offset="0" stop-color="#fff3b0"/><stop offset="1" stop-color="#fad25a"/></linearGradient></defs><path d="M.6 2.100C.6 1.300 1.200.700 2 .700h4.300c.5 0 .9.200 1.200.600l.800 1h9.300c.600 0 1 .400 1 1V14.200c0 .600-.400 1-1 1H1.600c-.600 0-1-.400-1-1z" fill="url(#fg3)" stroke="#d9962e" stroke-width="1.300"/><path d="M1.500 3.600h5.200l1.300 1.500h9.600" fill="none" stroke="#fffbe6" stroke-width="1"/><path d="M1.500 8.300h5.500" fill="none" stroke="#fffbe6" stroke-width="1"/></svg><div style="position:absolute;left:86px;top:111.0px;height:21px;line-height:21px;font-size:15px;color:#222;font-weight:normal;white-space:nowrap;">1101</div><div style="position:absolute;left:230px;top:111.0px;height:21px;line-height:21px;font-size:15px;color:#222;font-weight:normal;white-space:nowrap;">短期投资</div><div style="position:absolute;left:0px;top:105px;width:738px;height:1px;box-sizing:border-box;border-top:1px dotted #cfcfcf;"></div><div style="position:absolute;left:8.5px;top:146.0px;height:21px;line-height:21px;font-size:15px;color:#222;font-weight:normal;white-space:nowrap;">18</div><svg style="position:absolute;left:65.29999999999995px;top:148.0px;overflow:visible" width="17" height="20" viewBox="0 0 17 20" ><rect x="1" y="1" width="15" height="18" rx="1.200" fill="#fdfdfd" stroke="#c4c4c4" stroke-width="1.600"/><path d="M1.200 19.300h14.800" stroke="#b0b0b0" stroke-width="1"/><path d="M4 4.700h9M4 7.500h9M4 10.300h9M4 13.100h9M4 15.900h9" stroke="#8fadd2" stroke-width="1.400"/></svg><div style="position:absolute;left:86px;top:146.0px;height:21px;line-height:21px;font-size:15px;color:#222;font-weight:normal;white-space:nowrap;">1121</div><div style="position:absolute;left:230px;top:146.0px;height:21px;line-height:21px;font-size:15px;color:#222;font-weight:normal;white-space:nowrap;">应收票据</div><div style="position:absolute;left:418px;top:146.0px;height:21px;line-height:21px;font-size:15px;color:#222;font-weight:normal;white-space:nowrap;">资产</div><div style="position:absolute;left:543px;top:146.0px;height:21px;line-height:21px;font-size:15px;color:#222;font-weight:normal;white-space:nowrap;">借方</div><div style="position:absolute;left:0px;top:140px;width:738px;height:1px;box-sizing:border-box;border-top:1px dotted #cfcfcf;"></div><div style="position:absolute;left:8.5px;top:181.0px;height:21px;line-height:21px;font-size:15px;color:#222;font-weight:normal;white-space:nowrap;">19</div><svg style="position:absolute;left:65.29999999999995px;top:183.0px;overflow:visible" width="17" height="20" viewBox="0 0 17 20" ><rect x="1" y="1" width="15" height="18" rx="1.200" fill="#fdfdfd" stroke="#c4c4c4" stroke-width="1.600"/><path d="M1.200 19.300h14.800" stroke="#b0b0b0" stroke-width="1"/><path d="M4 4.700h9M4 7.500h9M4 10.300h9M4 13.100h9M4 15.900h9" stroke="#8fadd2" stroke-width="1.400"/></svg><div style="position:absolute;left:86px;top:181.0px;height:21px;line-height:21px;font-size:15px;color:#222;font-weight:normal;white-space:nowrap;">1122</div><div style="position:absolute;left:230px;top:181.0px;height:21px;line-height:21px;font-size:15px;color:#222;font-weight:normal;white-space:nowrap;">应收账款</div><div style="position:absolute;left:418px;top:181.0px;height:21px;line-height:21px;font-size:15px;color:#222;font-weight:normal;white-space:nowrap;">资产</div><div style="position:absolute;left:543px;top:181.0px;height:21px;line-height:21px;font-size:15px;color:#222;font-weight:normal;white-space:nowrap;">借方</div><div style="position:absolute;left:0px;top:175px;width:738px;height:1px;box-sizing:border-box;border-top:1px dotted #cfcfcf;"></div><div style="position:absolute;left:8.5px;top:216.0px;height:21px;line-height:21px;font-size:15px;color:#222;font-weight:normal;white-space:nowrap;">20</div><svg style="position:absolute;left:65.29999999999995px;top:218.0px;overflow:visible" width="17" height="20" viewBox="0 0 17 20" ><rect x="1" y="1" width="15" height="18" rx="1.200" fill="#fdfdfd" stroke="#c4c4c4" stroke-width="1.600"/><path d="M1.200 19.300h14.800" stroke="#b0b0b0" stroke-width="1"/><path d="M4 4.700h9M4 7.500h9M4 10.300h9M4 13.100h9M4 15.900h9" stroke="#8fadd2" stroke-width="1.400"/></svg><div style="position:absolute;left:86px;top:216.0px;height:21px;line-height:21px;font-size:15px;color:#222;font-weight:normal;white-space:nowrap;">1123</div><div style="position:absolute;left:230px;top:216.0px;height:21px;line-height:21px;font-size:15px;color:#222;font-weight:normal;white-space:nowrap;">预付账款</div><div style="position:absolute;left:418px;top:216.0px;height:21px;line-height:21px;font-size:15px;color:#222;font-weight:normal;white-space:nowrap;">资产</div><div style="position:absolute;left:543px;top:216.0px;height:21px;line-height:21px;font-size:15px;color:#222;font-weight:normal;white-space:nowrap;">借方</div><div style="position:absolute;left:0px;top:210px;width:738px;height:1px;box-sizing:border-box;border-top:1px dotted #cfcfcf;"></div><div style="position:absolute;left:8.5px;top:251.0px;height:21px;line-height:21px;font-size:15px;color:#222;font-weight:normal;white-space:nowrap;">21</div><svg style="position:absolute;left:65.29999999999995px;top:253.0px;overflow:visible" width="17" height="20" viewBox="0 0 17 20" ><rect x="1" y="1" width="15" height="18" rx="1.200" fill="#fdfdfd" stroke="#c4c4c4" stroke-width="1.600"/><path d="M1.200 19.300h14.800" stroke="#b0b0b0" stroke-width="1"/><path d="M4 4.700h9M4 7.500h9M4 10.300h9M4 13.100h9M4 15.900h9" stroke="#8fadd2" stroke-width="1.400"/></svg><div style="position:absolute;left:86px;top:251.0px;height:21px;line-height:21px;font-size:15px;color:#222;font-weight:normal;white-space:nowrap;">1131</div><div style="position:absolute;left:230px;top:251.0px;height:21px;line-height:21px;font-size:15px;color:#222;font-weight:normal;white-space:nowrap;">应收股利</div><div style="position:absolute;left:418px;top:251.0px;height:21px;line-height:21px;font-size:15px;color:#222;font-weight:normal;white-space:nowrap;">资产</div><div style="position:absolute;left:543px;top:251.0px;height:21px;line-height:21px;font-size:15px;color:#222;font-weight:normal;white-space:nowrap;">借方</div><div style="position:absolute;left:0px;top:245px;width:738px;height:1px;box-sizing:border-box;border-top:1px dotted #cfcfcf;"></div><div style="position:absolute;left:8.5px;top:286.0px;height:21px;line-height:21px;font-size:15px;color:#222;font-weight:normal;white-space:nowrap;">22</div><svg style="position:absolute;left:65.29999999999995px;top:288.0px;overflow:visible" width="17" height="20" viewBox="0 0 17 20" ><rect x="1" y="1" width="15" height="18" rx="1.200" fill="#fdfdfd" stroke="#c4c4c4" stroke-width="1.600"/><path d="M1.200 19.300h14.800" stroke="#b0b0b0" stroke-width="1"/><path d="M4 4.700h9M4 7.500h9M4 10.300h9M4 13.100h9M4 15.900h9" stroke="#8fadd2" stroke-width="1.400"/></svg><div style="position:absolute;left:86px;top:286.0px;height:21px;line-height:21px;font-size:15px;color:#222;font-weight:normal;white-space:nowrap;">1132</div><div style="position:absolute;left:230px;top:286.0px;height:21px;line-height:21px;font-size:15px;color:#222;font-weight:normal;white-space:nowrap;">应收利息</div><div style="position:absolute;left:418px;top:286.0px;height:21px;line-height:21px;font-size:15px;color:#222;font-weight:normal;white-space:nowrap;">资产</div><div style="position:absolute;left:543px;top:286.0px;height:21px;line-height:21px;font-size:15px;color:#222;font-weight:normal;white-space:nowrap;">借方</div><div style="position:absolute;left:0px;top:280px;width:738px;height:1px;box-sizing:border-box;border-top:1px dotted #cfcfcf;"></div><div style="position:absolute;left:8.5px;top:321.0px;height:21px;line-height:21px;font-size:15px;color:#222;font-weight:normal;white-space:nowrap;">23</div><svg style="position:absolute;left:65.29999999999995px;top:323.0px;overflow:visible" width="17" height="20" viewBox="0 0 17 20" ><rect x="1" y="1" width="15" height="18" rx="1.200" fill="#fdfdfd" stroke="#c4c4c4" stroke-width="1.600"/><path d="M1.200 19.300h14.800" stroke="#b0b0b0" stroke-width="1"/><path d="M4 4.700h9M4 7.500h9M4 10.300h9M4 13.100h9M4 15.900h9" stroke="#8fadd2" stroke-width="1.400"/></svg><div style="position:absolute;left:86px;top:321.0px;height:21px;line-height:21px;font-size:15px;color:#222;font-weight:normal;white-space:nowrap;">1221</div><div style="position:absolute;left:230px;top:321.0px;height:21px;line-height:21px;font-size:15px;color:#222;font-weight:normal;white-space:nowrap;">其他应收款</div><div style="position:absolute;left:418px;top:321.0px;height:21px;line-height:21px;font-size:15px;color:#222;font-weight:normal;white-space:nowrap;">资产</div><div style="position:absolute;left:543px;top:321.0px;height:21px;line-height:21px;font-size:15px;color:#222;font-weight:normal;white-space:nowrap;">借方</div><div style="position:absolute;left:0px;top:315px;width:738px;height:1px;box-sizing:border-box;border-top:1px dotted #cfcfcf;"></div><div style="position:absolute;left:8.5px;top:356.0px;height:21px;line-height:21px;font-size:15px;color:#222;font-weight:normal;white-space:nowrap;">24</div><svg style="position:absolute;left:65.29999999999995px;top:358.0px;overflow:visible" width="17" height="20" viewBox="0 0 17 20" ><rect x="1" y="1" width="15" height="18" rx="1.200" fill="#fdfdfd" stroke="#c4c4c4" stroke-width="1.600"/><path d="M1.200 19.300h14.800" stroke="#b0b0b0" stroke-width="1"/><path d="M4 4.700h9M4 7.500h9M4 10.300h9M4 13.100h9M4 15.900h9" stroke="#8fadd2" stroke-width="1.400"/></svg><div style="position:absolute;left:86px;top:356.0px;height:21px;line-height:21px;font-size:15px;color:#222;font-weight:normal;white-space:nowrap;">1401</div><div style="position:absolute;left:230px;top:356.0px;height:21px;line-height:21px;font-size:15px;color:#222;font-weight:normal;white-space:nowrap;">材料采购</div><div style="position:absolute;left:418px;top:356.0px;height:21px;line-height:21px;font-size:15px;color:#222;font-weight:normal;white-space:nowrap;">资产</div><div style="position:absolute;left:543px;top:356.0px;height:21px;line-height:21px;font-size:15px;color:#222;font-weight:normal;white-space:nowrap;">借方</div><div style="position:absolute;left:0px;top:350px;width:738px;height:1px;box-sizing:border-box;border-top:1px dotted #cfcfcf;"></div><div style="position:absolute;left:8.5px;top:391.0px;height:21px;line-height:21px;font-size:15px;color:#222;font-weight:normal;white-space:nowrap;">25</div><svg style="position:absolute;left:65.29999999999995px;top:393.0px;overflow:visible" width="17" height="20" viewBox="0 0 17 20" ><rect x="1" y="1" width="15" height="18" rx="1.200" fill="#fdfdfd" stroke="#c4c4c4" stroke-width="1.600"/><path d="M1.200 19.300h14.800" stroke="#b0b0b0" stroke-width="1"/><path d="M4 4.700h9M4 7.500h9M4 10.300h9M4 13.100h9M4 15.900h9" stroke="#8fadd2" stroke-width="1.400"/></svg><div style="position:absolute;left:86px;top:391.0px;height:21px;line-height:21px;font-size:15px;color:#222;font-weight:normal;white-space:nowrap;">1402</div><div style="position:absolute;left:230px;top:391.0px;height:21px;line-height:21px;font-size:15px;color:#222;font-weight:normal;white-space:nowrap;">在途物资</div><div style="position:absolute;left:418px;top:391.0px;height:21px;line-height:21px;font-size:15px;color:#222;font-weight:normal;white-space:nowrap;">资产</div><div style="position:absolute;left:543px;top:391.0px;height:21px;line-height:21px;font-size:15px;color:#222;font-weight:normal;white-space:nowrap;">借方</div><div style="position:absolute;left:0px;top:385px;width:738px;height:1px;box-sizing:border-box;border-top:1px dotted #cfcfcf;"></div><div style="position:absolute;left:8.5px;top:426.0px;height:21px;line-height:21px;font-size:15px;color:#222;font-weight:normal;white-space:nowrap;">26</div><svg style="position:absolute;left:65.29999999999995px;top:428.0px;overflow:visible" width="17" height="20" viewBox="0 0 17 20" ><rect x="1" y="1" width="15" height="18" rx="1.200" fill="#fdfdfd" stroke="#c4c4c4" stroke-width="1.600"/><path d="M1.200 19.300h14.800" stroke="#b0b0b0" stroke-width="1"/><path d="M4 4.700h9M4 7.500h9M4 10.300h9M4 13.100h9M4 15.900h9" stroke="#8fadd2" stroke-width="1.400"/></svg><div style="position:absolute;left:86px;top:426.0px;height:21px;line-height:21px;font-size:15px;color:#222;font-weight:normal;white-space:nowrap;">1403</div><div style="position:absolute;left:230px;top:426.0px;height:21px;line-height:21px;font-size:15px;color:#222;font-weight:normal;white-space:nowrap;">原材料</div><div style="position:absolute;left:418px;top:426.0px;height:21px;line-height:21px;font-size:15px;color:#222;font-weight:normal;white-space:nowrap;">资产</div><div style="position:absolute;left:543px;top:426.0px;height:21px;line-height:21px;font-size:15px;color:#222;font-weight:normal;white-space:nowrap;">借方</div><div style="position:absolute;left:0px;top:420px;width:738px;height:1px;box-sizing:border-box;border-top:1px dotted #cfcfcf;"></div><div style="position:absolute;left:36px;top:0px;width:1px;height:447px;box-sizing:border-box;border-left:1px dotted #d2d2d2;"></div><div style="position:absolute;left:224px;top:0px;width:1px;height:447px;box-sizing:border-box;border-left:1px dotted #d2d2d2;"></div><div style="position:absolute;left:412px;top:0px;width:1px;height:447px;box-sizing:border-box;border-left:1px dotted #d2d2d2;"></div><div style="position:absolute;left:537px;top:0px;width:1px;height:447px;box-sizing:border-box;border-left:1px dotted #d2d2d2;"></div><div style="position:absolute;left:662px;top:0px;width:1px;height:447px;box-sizing:border-box;border-left:1px dotted #d2d2d2;"></div></div><div style="position:absolute;left:1811px;top:403px;width:9px;height:453px;box-sizing:border-box;background:#fafafa;"></div><div style="position:absolute;left:1811.5px;top:404px;width:8px;height:170px;box-sizing:border-box;background:#dcdcdc;border-radius:4px;"></div><div style="position:absolute;left:1109px;top:848px;width:702px;height:8px;box-sizing:border-box;background:#fbfbfb;"></div><div style="position:absolute;left:1111px;top:848px;width:652px;height:8px;box-sizing:border-box;background:#e3e3e3;border-radius:4px;box-shadow:0 0 1px rgba(0,0,0,.25);"></div>
<div style="position:absolute;left:1456px;top:434px;width:189px;height:96px;box-sizing:border-box;background:#fafafa;border:1px solid #d8d8d8;border-radius:4px;box-shadow:1px 3px 18px rgba(0,0,0,.34);"></div><div style="position:absolute;left:1457px;top:435px;width:31px;height:94px;box-sizing:border-box;background:#f5f5f5;border-right:1px solid #e6e6e6;"></div><svg style="position:absolute;left:1465px;top:443.7px;overflow:visible" width="12" height="12" viewBox="0 0 13 13" ><path d="M4.900 0h3.200v4.900H13v3.200H8.100V13H4.900V8.100H0V4.900h4.900z" fill="#000"/></svg><svg style="position:absolute;left:1464.5px;top:474px;overflow:visible" width="14" height="14" viewBox="0 0 14 14" ><path d="M10.200.6c.4-.4 1-.4 1.400 0l1.800 1.800c.4.400.4 1 0 1.400l-1.200 1.200-3.200-3.200z M8.200 2.600l3.200 3.200-7 7-3.700.7c-.3.100-.5-.2-.5-.5l.800-3.600z M2.300 10.200l-.5 2 2-.500z" fill="#000" fill-rule="evenodd"/></svg><svg style="position:absolute;left:1465.5px;top:505px;overflow:visible" width="12" height="13" viewBox="0 0 12 13" ><path d="M0 1.600h3.700L4.300.400c.1-.2.400-.4.600-.4h2.200c.3 0 .5.200.6.400l.6 1.200H12v1.400H0z" fill="#000"/><path d="M.9 3.800h10.200l-.5 8c0 .7-.6 1.200-1.300 1.200H2.700c-.7 0-1.300-.5-1.300-1.200z M3.400 5.200v6h1v-6z M5.500 5.200v6h1v-6z M7.600 5.200v6h1v-6z" fill="#000" fill-rule="evenodd"/></svg><div style="position:absolute;left:1497px;top:439.5px;height:21px;line-height:21px;font-size:15px;color:#333;font-weight:normal;white-space:nowrap;">添加</div><div style="position:absolute;left:1497px;top:470.5px;height:21px;line-height:21px;font-size:15px;color:#333;font-weight:normal;white-space:nowrap;">修改</div><div style="position:absolute;left:1497px;top:502.5px;height:21px;line-height:21px;font-size:15px;color:#333;font-weight:normal;white-space:nowrap;">删除</div>
<div style="position:absolute;left:800px;top:458px;width:105px;height:47px;box-sizing:border-box;border:5px solid #ed1c24;border-radius:3px;"></div><div style="position:absolute;left:1389.5px;top:292.5px;width:78.5px;height:40px;box-sizing:border-box;border:5px solid #ed1c24;border-radius:4px;"></div><div style="position:absolute;left:1458.2px;top:432.2px;width:186.6px;height:100.8px;box-sizing:border-box;border:5.600px solid #ed1c24;border-radius:4px;"></div><svg style="position:absolute;left:0;top:0;overflow:visible" width="1920" height="902"><path d="M905.500 464.500 L1081.200 285.400" stroke="#ed1c24" stroke-width="4.300" fill="none"/><path d="M1088.900 278 L1082.600 293.600 L1079.900 286.900 L1073.600 284.300 Z" fill="#ed1c24"/></svg>
</div>
</body></html>
